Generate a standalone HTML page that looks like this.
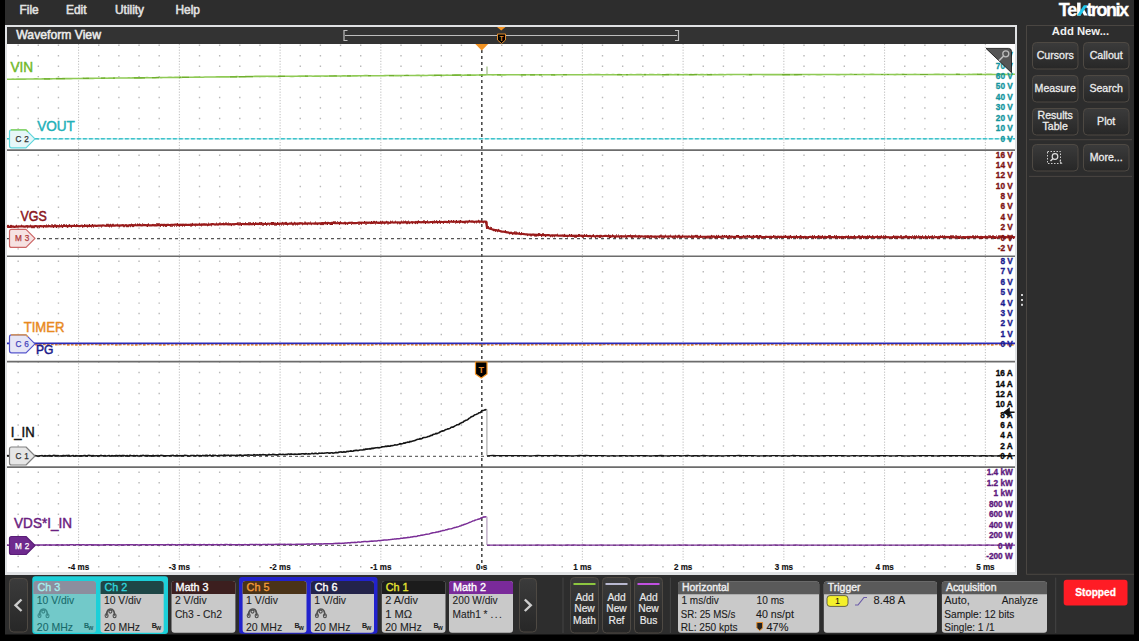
<!DOCTYPE html>
<html><head><meta charset="utf-8"><style>
html,body{margin:0;padding:0;background:#000;width:1139px;height:641px;overflow:hidden}
svg{display:block;font-family:"Liberation Sans", sans-serif}
</style></head><body>
<svg width="1139" height="641" viewBox="0 0 1139 641">
<rect x="0" y="0" width="1139" height="641" fill="#000"/>
<rect x="5" y="0" width="1129" height="634.5" fill="#2d2d2d"/>
<text transform="translate(19.5,13.8) scale(0.96,1)" font-size="12.4" fill="#e2e2e2" font-weight="400" text-anchor="start" stroke="#e2e2e2" stroke-width="0.55" >File</text>
<text transform="translate(66,13.8) scale(0.96,1)" font-size="12.4" fill="#e2e2e2" font-weight="400" text-anchor="start" stroke="#e2e2e2" stroke-width="0.55" >Edit</text>
<text transform="translate(115,13.8) scale(0.96,1)" font-size="12.4" fill="#e2e2e2" font-weight="400" text-anchor="start" stroke="#e2e2e2" stroke-width="0.55" >Utility</text>
<text transform="translate(175.5,13.8) scale(0.96,1)" font-size="12.4" fill="#e2e2e2" font-weight="400" text-anchor="start" stroke="#e2e2e2" stroke-width="0.55" >Help</text>
<text x="1058.8" y="15.6" font-size="18" font-weight="700" fill="#fff" stroke="#fff" stroke-width="0.35" letter-spacing="-1.3">Te</text>
<rect x="1077.1" y="2.6" width="3.5" height="13" fill="#fff"/>
<polygon points="1081.2,10.2 1083.6,8.6 1087.6,15.6 1084.0,15.6" fill="#fff"/>
<polygon points="1077.0,15.6 1080.6,15.6 1087.4,5.2 1083.8,5.2" fill="#1fc8ee"/>
<text x="1086.4" y="15.6" font-size="18" font-weight="700" fill="#fff" stroke="#fff" stroke-width="0.35" letter-spacing="-1.5">tronix</text>
<rect x="5" y="25" width="1012" height="550" fill="#e0e2e4"/>
<rect x="7" y="27" width="1008" height="17" fill="#333333"/>
<rect x="7" y="44" width="1008" height="528" fill="#ffffff"/>
<text x="16.3" y="38.7" font-size="12.2" fill="#ececec" font-weight="400" text-anchor="start" stroke="#ececec" stroke-width="0.5" >Waveform View</text>
<g stroke="#bdbdbd" stroke-width="1.2" fill="none">
<line x1="345" y1="35.5" x2="677" y2="35.5"/>
<polyline points="347.5,30.5 344,30.5 344,40.5 347.5,40.5"/>
<polyline points="675,30.5 678.5,30.5 678.5,40.5 675,40.5"/>
</g>
<polygon points="497,27 505.5,27 501.25,30.5" fill="#f39322"/>
<path d="M497.5,34 h8 v6 l-4,3.5 l-4,-3.5 z" fill="#000" stroke="#e08a2a" stroke-width="1"/>
<text x="501.5" y="40.6" font-size="6.5" font-weight="700" fill="#e08a2a" text-anchor="middle">T</text>
<path d="M17.45,45.30h1.4M37.60,45.30h1.4M57.75,45.30h1.4M98.05,45.30h1.4M118.20,45.30h1.4M138.35,45.30h1.4M158.50,45.30h1.4M198.80,45.30h1.4M218.95,45.30h1.4M239.10,45.30h1.4M259.25,45.30h1.4M299.55,45.30h1.4M319.70,45.30h1.4M339.85,45.30h1.4M360.00,45.30h1.4M400.30,45.30h1.4M420.45,45.30h1.4M440.60,45.30h1.4M460.75,45.30h1.4M501.05,45.30h1.4M521.20,45.30h1.4M541.35,45.30h1.4M561.50,45.30h1.4M601.80,45.30h1.4M621.95,45.30h1.4M642.10,45.30h1.4M662.25,45.30h1.4M702.55,45.30h1.4M722.70,45.30h1.4M742.85,45.30h1.4M763.00,45.30h1.4M803.30,45.30h1.4M823.45,45.30h1.4M843.60,45.30h1.4M863.75,45.30h1.4M904.05,45.30h1.4M924.20,45.30h1.4M944.35,45.30h1.4M964.50,45.30h1.4M17.45,55.75h1.4M37.60,55.75h1.4M57.75,55.75h1.4M98.05,55.75h1.4M118.20,55.75h1.4M138.35,55.75h1.4M158.50,55.75h1.4M198.80,55.75h1.4M218.95,55.75h1.4M239.10,55.75h1.4M259.25,55.75h1.4M299.55,55.75h1.4M319.70,55.75h1.4M339.85,55.75h1.4M360.00,55.75h1.4M400.30,55.75h1.4M420.45,55.75h1.4M440.60,55.75h1.4M460.75,55.75h1.4M501.05,55.75h1.4M521.20,55.75h1.4M541.35,55.75h1.4M561.50,55.75h1.4M601.80,55.75h1.4M621.95,55.75h1.4M642.10,55.75h1.4M662.25,55.75h1.4M702.55,55.75h1.4M722.70,55.75h1.4M742.85,55.75h1.4M763.00,55.75h1.4M803.30,55.75h1.4M823.45,55.75h1.4M843.60,55.75h1.4M863.75,55.75h1.4M904.05,55.75h1.4M924.20,55.75h1.4M944.35,55.75h1.4M964.50,55.75h1.4M17.45,66.20h1.4M37.60,66.20h1.4M57.75,66.20h1.4M98.05,66.20h1.4M118.20,66.20h1.4M138.35,66.20h1.4M158.50,66.20h1.4M198.80,66.20h1.4M218.95,66.20h1.4M239.10,66.20h1.4M259.25,66.20h1.4M299.55,66.20h1.4M319.70,66.20h1.4M339.85,66.20h1.4M360.00,66.20h1.4M400.30,66.20h1.4M420.45,66.20h1.4M440.60,66.20h1.4M460.75,66.20h1.4M501.05,66.20h1.4M521.20,66.20h1.4M541.35,66.20h1.4M561.50,66.20h1.4M601.80,66.20h1.4M621.95,66.20h1.4M642.10,66.20h1.4M662.25,66.20h1.4M702.55,66.20h1.4M722.70,66.20h1.4M742.85,66.20h1.4M763.00,66.20h1.4M803.30,66.20h1.4M823.45,66.20h1.4M843.60,66.20h1.4M863.75,66.20h1.4M904.05,66.20h1.4M924.20,66.20h1.4M944.35,66.20h1.4M964.50,66.20h1.4M17.45,76.65h1.4M37.60,76.65h1.4M57.75,76.65h1.4M98.05,76.65h1.4M118.20,76.65h1.4M138.35,76.65h1.4M158.50,76.65h1.4M198.80,76.65h1.4M218.95,76.65h1.4M239.10,76.65h1.4M259.25,76.65h1.4M299.55,76.65h1.4M319.70,76.65h1.4M339.85,76.65h1.4M360.00,76.65h1.4M400.30,76.65h1.4M420.45,76.65h1.4M440.60,76.65h1.4M460.75,76.65h1.4M501.05,76.65h1.4M521.20,76.65h1.4M541.35,76.65h1.4M561.50,76.65h1.4M601.80,76.65h1.4M621.95,76.65h1.4M642.10,76.65h1.4M662.25,76.65h1.4M702.55,76.65h1.4M722.70,76.65h1.4M742.85,76.65h1.4M763.00,76.65h1.4M803.30,76.65h1.4M823.45,76.65h1.4M843.60,76.65h1.4M863.75,76.65h1.4M904.05,76.65h1.4M924.20,76.65h1.4M944.35,76.65h1.4M964.50,76.65h1.4M17.45,87.10h1.4M37.60,87.10h1.4M57.75,87.10h1.4M98.05,87.10h1.4M118.20,87.10h1.4M138.35,87.10h1.4M158.50,87.10h1.4M198.80,87.10h1.4M218.95,87.10h1.4M239.10,87.10h1.4M259.25,87.10h1.4M299.55,87.10h1.4M319.70,87.10h1.4M339.85,87.10h1.4M360.00,87.10h1.4M400.30,87.10h1.4M420.45,87.10h1.4M440.60,87.10h1.4M460.75,87.10h1.4M501.05,87.10h1.4M521.20,87.10h1.4M541.35,87.10h1.4M561.50,87.10h1.4M601.80,87.10h1.4M621.95,87.10h1.4M642.10,87.10h1.4M662.25,87.10h1.4M702.55,87.10h1.4M722.70,87.10h1.4M742.85,87.10h1.4M763.00,87.10h1.4M803.30,87.10h1.4M823.45,87.10h1.4M843.60,87.10h1.4M863.75,87.10h1.4M904.05,87.10h1.4M924.20,87.10h1.4M944.35,87.10h1.4M964.50,87.10h1.4M17.45,97.55h1.4M37.60,97.55h1.4M57.75,97.55h1.4M98.05,97.55h1.4M118.20,97.55h1.4M138.35,97.55h1.4M158.50,97.55h1.4M198.80,97.55h1.4M218.95,97.55h1.4M239.10,97.55h1.4M259.25,97.55h1.4M299.55,97.55h1.4M319.70,97.55h1.4M339.85,97.55h1.4M360.00,97.55h1.4M400.30,97.55h1.4M420.45,97.55h1.4M440.60,97.55h1.4M460.75,97.55h1.4M501.05,97.55h1.4M521.20,97.55h1.4M541.35,97.55h1.4M561.50,97.55h1.4M601.80,97.55h1.4M621.95,97.55h1.4M642.10,97.55h1.4M662.25,97.55h1.4M702.55,97.55h1.4M722.70,97.55h1.4M742.85,97.55h1.4M763.00,97.55h1.4M803.30,97.55h1.4M823.45,97.55h1.4M843.60,97.55h1.4M863.75,97.55h1.4M904.05,97.55h1.4M924.20,97.55h1.4M944.35,97.55h1.4M964.50,97.55h1.4M17.45,108.00h1.4M37.60,108.00h1.4M57.75,108.00h1.4M98.05,108.00h1.4M118.20,108.00h1.4M138.35,108.00h1.4M158.50,108.00h1.4M198.80,108.00h1.4M218.95,108.00h1.4M239.10,108.00h1.4M259.25,108.00h1.4M299.55,108.00h1.4M319.70,108.00h1.4M339.85,108.00h1.4M360.00,108.00h1.4M400.30,108.00h1.4M420.45,108.00h1.4M440.60,108.00h1.4M460.75,108.00h1.4M501.05,108.00h1.4M521.20,108.00h1.4M541.35,108.00h1.4M561.50,108.00h1.4M601.80,108.00h1.4M621.95,108.00h1.4M642.10,108.00h1.4M662.25,108.00h1.4M702.55,108.00h1.4M722.70,108.00h1.4M742.85,108.00h1.4M763.00,108.00h1.4M803.30,108.00h1.4M823.45,108.00h1.4M843.60,108.00h1.4M863.75,108.00h1.4M904.05,108.00h1.4M924.20,108.00h1.4M944.35,108.00h1.4M964.50,108.00h1.4M17.45,118.45h1.4M37.60,118.45h1.4M57.75,118.45h1.4M98.05,118.45h1.4M118.20,118.45h1.4M138.35,118.45h1.4M158.50,118.45h1.4M198.80,118.45h1.4M218.95,118.45h1.4M239.10,118.45h1.4M259.25,118.45h1.4M299.55,118.45h1.4M319.70,118.45h1.4M339.85,118.45h1.4M360.00,118.45h1.4M400.30,118.45h1.4M420.45,118.45h1.4M440.60,118.45h1.4M460.75,118.45h1.4M501.05,118.45h1.4M521.20,118.45h1.4M541.35,118.45h1.4M561.50,118.45h1.4M601.80,118.45h1.4M621.95,118.45h1.4M642.10,118.45h1.4M662.25,118.45h1.4M702.55,118.45h1.4M722.70,118.45h1.4M742.85,118.45h1.4M763.00,118.45h1.4M803.30,118.45h1.4M823.45,118.45h1.4M843.60,118.45h1.4M863.75,118.45h1.4M904.05,118.45h1.4M924.20,118.45h1.4M944.35,118.45h1.4M964.50,118.45h1.4M17.45,128.90h1.4M37.60,128.90h1.4M57.75,128.90h1.4M98.05,128.90h1.4M118.20,128.90h1.4M138.35,128.90h1.4M158.50,128.90h1.4M198.80,128.90h1.4M218.95,128.90h1.4M239.10,128.90h1.4M259.25,128.90h1.4M299.55,128.90h1.4M319.70,128.90h1.4M339.85,128.90h1.4M360.00,128.90h1.4M400.30,128.90h1.4M420.45,128.90h1.4M440.60,128.90h1.4M460.75,128.90h1.4M501.05,128.90h1.4M521.20,128.90h1.4M541.35,128.90h1.4M561.50,128.90h1.4M601.80,128.90h1.4M621.95,128.90h1.4M642.10,128.90h1.4M662.25,128.90h1.4M702.55,128.90h1.4M722.70,128.90h1.4M742.85,128.90h1.4M763.00,128.90h1.4M803.30,128.90h1.4M823.45,128.90h1.4M843.60,128.90h1.4M863.75,128.90h1.4M904.05,128.90h1.4M924.20,128.90h1.4M944.35,128.90h1.4M964.50,128.90h1.4M17.45,139.35h1.4M37.60,139.35h1.4M57.75,139.35h1.4M98.05,139.35h1.4M118.20,139.35h1.4M138.35,139.35h1.4M158.50,139.35h1.4M198.80,139.35h1.4M218.95,139.35h1.4M239.10,139.35h1.4M259.25,139.35h1.4M299.55,139.35h1.4M319.70,139.35h1.4M339.85,139.35h1.4M360.00,139.35h1.4M400.30,139.35h1.4M420.45,139.35h1.4M440.60,139.35h1.4M460.75,139.35h1.4M501.05,139.35h1.4M521.20,139.35h1.4M541.35,139.35h1.4M561.50,139.35h1.4M601.80,139.35h1.4M621.95,139.35h1.4M642.10,139.35h1.4M662.25,139.35h1.4M702.55,139.35h1.4M722.70,139.35h1.4M742.85,139.35h1.4M763.00,139.35h1.4M803.30,139.35h1.4M823.45,139.35h1.4M843.60,139.35h1.4M863.75,139.35h1.4M904.05,139.35h1.4M924.20,139.35h1.4M944.35,139.35h1.4M964.50,139.35h1.4M17.45,155.30h1.4M37.60,155.30h1.4M57.75,155.30h1.4M98.05,155.30h1.4M118.20,155.30h1.4M138.35,155.30h1.4M158.50,155.30h1.4M198.80,155.30h1.4M218.95,155.30h1.4M239.10,155.30h1.4M259.25,155.30h1.4M299.55,155.30h1.4M319.70,155.30h1.4M339.85,155.30h1.4M360.00,155.30h1.4M400.30,155.30h1.4M420.45,155.30h1.4M440.60,155.30h1.4M460.75,155.30h1.4M501.05,155.30h1.4M521.20,155.30h1.4M541.35,155.30h1.4M561.50,155.30h1.4M601.80,155.30h1.4M621.95,155.30h1.4M642.10,155.30h1.4M662.25,155.30h1.4M702.55,155.30h1.4M722.70,155.30h1.4M742.85,155.30h1.4M763.00,155.30h1.4M803.30,155.30h1.4M823.45,155.30h1.4M843.60,155.30h1.4M863.75,155.30h1.4M904.05,155.30h1.4M924.20,155.30h1.4M944.35,155.30h1.4M964.50,155.30h1.4M17.45,165.70h1.4M37.60,165.70h1.4M57.75,165.70h1.4M98.05,165.70h1.4M118.20,165.70h1.4M138.35,165.70h1.4M158.50,165.70h1.4M198.80,165.70h1.4M218.95,165.70h1.4M239.10,165.70h1.4M259.25,165.70h1.4M299.55,165.70h1.4M319.70,165.70h1.4M339.85,165.70h1.4M360.00,165.70h1.4M400.30,165.70h1.4M420.45,165.70h1.4M440.60,165.70h1.4M460.75,165.70h1.4M501.05,165.70h1.4M521.20,165.70h1.4M541.35,165.70h1.4M561.50,165.70h1.4M601.80,165.70h1.4M621.95,165.70h1.4M642.10,165.70h1.4M662.25,165.70h1.4M702.55,165.70h1.4M722.70,165.70h1.4M742.85,165.70h1.4M763.00,165.70h1.4M803.30,165.70h1.4M823.45,165.70h1.4M843.60,165.70h1.4M863.75,165.70h1.4M904.05,165.70h1.4M924.20,165.70h1.4M944.35,165.70h1.4M964.50,165.70h1.4M17.45,176.10h1.4M37.60,176.10h1.4M57.75,176.10h1.4M98.05,176.10h1.4M118.20,176.10h1.4M138.35,176.10h1.4M158.50,176.10h1.4M198.80,176.10h1.4M218.95,176.10h1.4M239.10,176.10h1.4M259.25,176.10h1.4M299.55,176.10h1.4M319.70,176.10h1.4M339.85,176.10h1.4M360.00,176.10h1.4M400.30,176.10h1.4M420.45,176.10h1.4M440.60,176.10h1.4M460.75,176.10h1.4M501.05,176.10h1.4M521.20,176.10h1.4M541.35,176.10h1.4M561.50,176.10h1.4M601.80,176.10h1.4M621.95,176.10h1.4M642.10,176.10h1.4M662.25,176.10h1.4M702.55,176.10h1.4M722.70,176.10h1.4M742.85,176.10h1.4M763.00,176.10h1.4M803.30,176.10h1.4M823.45,176.10h1.4M843.60,176.10h1.4M863.75,176.10h1.4M904.05,176.10h1.4M924.20,176.10h1.4M944.35,176.10h1.4M964.50,176.10h1.4M17.45,186.50h1.4M37.60,186.50h1.4M57.75,186.50h1.4M98.05,186.50h1.4M118.20,186.50h1.4M138.35,186.50h1.4M158.50,186.50h1.4M198.80,186.50h1.4M218.95,186.50h1.4M239.10,186.50h1.4M259.25,186.50h1.4M299.55,186.50h1.4M319.70,186.50h1.4M339.85,186.50h1.4M360.00,186.50h1.4M400.30,186.50h1.4M420.45,186.50h1.4M440.60,186.50h1.4M460.75,186.50h1.4M501.05,186.50h1.4M521.20,186.50h1.4M541.35,186.50h1.4M561.50,186.50h1.4M601.80,186.50h1.4M621.95,186.50h1.4M642.10,186.50h1.4M662.25,186.50h1.4M702.55,186.50h1.4M722.70,186.50h1.4M742.85,186.50h1.4M763.00,186.50h1.4M803.30,186.50h1.4M823.45,186.50h1.4M843.60,186.50h1.4M863.75,186.50h1.4M904.05,186.50h1.4M924.20,186.50h1.4M944.35,186.50h1.4M964.50,186.50h1.4M17.45,196.90h1.4M37.60,196.90h1.4M57.75,196.90h1.4M98.05,196.90h1.4M118.20,196.90h1.4M138.35,196.90h1.4M158.50,196.90h1.4M198.80,196.90h1.4M218.95,196.90h1.4M239.10,196.90h1.4M259.25,196.90h1.4M299.55,196.90h1.4M319.70,196.90h1.4M339.85,196.90h1.4M360.00,196.90h1.4M400.30,196.90h1.4M420.45,196.90h1.4M440.60,196.90h1.4M460.75,196.90h1.4M501.05,196.90h1.4M521.20,196.90h1.4M541.35,196.90h1.4M561.50,196.90h1.4M601.80,196.90h1.4M621.95,196.90h1.4M642.10,196.90h1.4M662.25,196.90h1.4M702.55,196.90h1.4M722.70,196.90h1.4M742.85,196.90h1.4M763.00,196.90h1.4M803.30,196.90h1.4M823.45,196.90h1.4M843.60,196.90h1.4M863.75,196.90h1.4M904.05,196.90h1.4M924.20,196.90h1.4M944.35,196.90h1.4M964.50,196.90h1.4M17.45,207.30h1.4M37.60,207.30h1.4M57.75,207.30h1.4M98.05,207.30h1.4M118.20,207.30h1.4M138.35,207.30h1.4M158.50,207.30h1.4M198.80,207.30h1.4M218.95,207.30h1.4M239.10,207.30h1.4M259.25,207.30h1.4M299.55,207.30h1.4M319.70,207.30h1.4M339.85,207.30h1.4M360.00,207.30h1.4M400.30,207.30h1.4M420.45,207.30h1.4M440.60,207.30h1.4M460.75,207.30h1.4M501.05,207.30h1.4M521.20,207.30h1.4M541.35,207.30h1.4M561.50,207.30h1.4M601.80,207.30h1.4M621.95,207.30h1.4M642.10,207.30h1.4M662.25,207.30h1.4M702.55,207.30h1.4M722.70,207.30h1.4M742.85,207.30h1.4M763.00,207.30h1.4M803.30,207.30h1.4M823.45,207.30h1.4M843.60,207.30h1.4M863.75,207.30h1.4M904.05,207.30h1.4M924.20,207.30h1.4M944.35,207.30h1.4M964.50,207.30h1.4M17.45,217.70h1.4M37.60,217.70h1.4M57.75,217.70h1.4M98.05,217.70h1.4M118.20,217.70h1.4M138.35,217.70h1.4M158.50,217.70h1.4M198.80,217.70h1.4M218.95,217.70h1.4M239.10,217.70h1.4M259.25,217.70h1.4M299.55,217.70h1.4M319.70,217.70h1.4M339.85,217.70h1.4M360.00,217.70h1.4M400.30,217.70h1.4M420.45,217.70h1.4M440.60,217.70h1.4M460.75,217.70h1.4M501.05,217.70h1.4M521.20,217.70h1.4M541.35,217.70h1.4M561.50,217.70h1.4M601.80,217.70h1.4M621.95,217.70h1.4M642.10,217.70h1.4M662.25,217.70h1.4M702.55,217.70h1.4M722.70,217.70h1.4M742.85,217.70h1.4M763.00,217.70h1.4M803.30,217.70h1.4M823.45,217.70h1.4M843.60,217.70h1.4M863.75,217.70h1.4M904.05,217.70h1.4M924.20,217.70h1.4M944.35,217.70h1.4M964.50,217.70h1.4M17.45,228.10h1.4M37.60,228.10h1.4M57.75,228.10h1.4M98.05,228.10h1.4M118.20,228.10h1.4M138.35,228.10h1.4M158.50,228.10h1.4M198.80,228.10h1.4M218.95,228.10h1.4M239.10,228.10h1.4M259.25,228.10h1.4M299.55,228.10h1.4M319.70,228.10h1.4M339.85,228.10h1.4M360.00,228.10h1.4M400.30,228.10h1.4M420.45,228.10h1.4M440.60,228.10h1.4M460.75,228.10h1.4M501.05,228.10h1.4M521.20,228.10h1.4M541.35,228.10h1.4M561.50,228.10h1.4M601.80,228.10h1.4M621.95,228.10h1.4M642.10,228.10h1.4M662.25,228.10h1.4M702.55,228.10h1.4M722.70,228.10h1.4M742.85,228.10h1.4M763.00,228.10h1.4M803.30,228.10h1.4M823.45,228.10h1.4M843.60,228.10h1.4M863.75,228.10h1.4M904.05,228.10h1.4M924.20,228.10h1.4M944.35,228.10h1.4M964.50,228.10h1.4M17.45,238.50h1.4M37.60,238.50h1.4M57.75,238.50h1.4M98.05,238.50h1.4M118.20,238.50h1.4M138.35,238.50h1.4M158.50,238.50h1.4M198.80,238.50h1.4M218.95,238.50h1.4M239.10,238.50h1.4M259.25,238.50h1.4M299.55,238.50h1.4M319.70,238.50h1.4M339.85,238.50h1.4M360.00,238.50h1.4M400.30,238.50h1.4M420.45,238.50h1.4M440.60,238.50h1.4M460.75,238.50h1.4M501.05,238.50h1.4M521.20,238.50h1.4M541.35,238.50h1.4M561.50,238.50h1.4M601.80,238.50h1.4M621.95,238.50h1.4M642.10,238.50h1.4M662.25,238.50h1.4M702.55,238.50h1.4M722.70,238.50h1.4M742.85,238.50h1.4M763.00,238.50h1.4M803.30,238.50h1.4M823.45,238.50h1.4M843.60,238.50h1.4M863.75,238.50h1.4M904.05,238.50h1.4M924.20,238.50h1.4M944.35,238.50h1.4M964.50,238.50h1.4M17.45,248.90h1.4M37.60,248.90h1.4M57.75,248.90h1.4M98.05,248.90h1.4M118.20,248.90h1.4M138.35,248.90h1.4M158.50,248.90h1.4M198.80,248.90h1.4M218.95,248.90h1.4M239.10,248.90h1.4M259.25,248.90h1.4M299.55,248.90h1.4M319.70,248.90h1.4M339.85,248.90h1.4M360.00,248.90h1.4M400.30,248.90h1.4M420.45,248.90h1.4M440.60,248.90h1.4M460.75,248.90h1.4M501.05,248.90h1.4M521.20,248.90h1.4M541.35,248.90h1.4M561.50,248.90h1.4M601.80,248.90h1.4M621.95,248.90h1.4M642.10,248.90h1.4M662.25,248.90h1.4M702.55,248.90h1.4M722.70,248.90h1.4M742.85,248.90h1.4M763.00,248.90h1.4M803.30,248.90h1.4M823.45,248.90h1.4M843.60,248.90h1.4M863.75,248.90h1.4M904.05,248.90h1.4M924.20,248.90h1.4M944.35,248.90h1.4M964.50,248.90h1.4M17.45,261.30h1.4M37.60,261.30h1.4M57.75,261.30h1.4M98.05,261.30h1.4M118.20,261.30h1.4M138.35,261.30h1.4M158.50,261.30h1.4M198.80,261.30h1.4M218.95,261.30h1.4M239.10,261.30h1.4M259.25,261.30h1.4M299.55,261.30h1.4M319.70,261.30h1.4M339.85,261.30h1.4M360.00,261.30h1.4M400.30,261.30h1.4M420.45,261.30h1.4M440.60,261.30h1.4M460.75,261.30h1.4M501.05,261.30h1.4M521.20,261.30h1.4M541.35,261.30h1.4M561.50,261.30h1.4M601.80,261.30h1.4M621.95,261.30h1.4M642.10,261.30h1.4M662.25,261.30h1.4M702.55,261.30h1.4M722.70,261.30h1.4M742.85,261.30h1.4M763.00,261.30h1.4M803.30,261.30h1.4M823.45,261.30h1.4M843.60,261.30h1.4M863.75,261.30h1.4M904.05,261.30h1.4M924.20,261.30h1.4M944.35,261.30h1.4M964.50,261.30h1.4M17.45,271.75h1.4M37.60,271.75h1.4M57.75,271.75h1.4M98.05,271.75h1.4M118.20,271.75h1.4M138.35,271.75h1.4M158.50,271.75h1.4M198.80,271.75h1.4M218.95,271.75h1.4M239.10,271.75h1.4M259.25,271.75h1.4M299.55,271.75h1.4M319.70,271.75h1.4M339.85,271.75h1.4M360.00,271.75h1.4M400.30,271.75h1.4M420.45,271.75h1.4M440.60,271.75h1.4M460.75,271.75h1.4M501.05,271.75h1.4M521.20,271.75h1.4M541.35,271.75h1.4M561.50,271.75h1.4M601.80,271.75h1.4M621.95,271.75h1.4M642.10,271.75h1.4M662.25,271.75h1.4M702.55,271.75h1.4M722.70,271.75h1.4M742.85,271.75h1.4M763.00,271.75h1.4M803.30,271.75h1.4M823.45,271.75h1.4M843.60,271.75h1.4M863.75,271.75h1.4M904.05,271.75h1.4M924.20,271.75h1.4M944.35,271.75h1.4M964.50,271.75h1.4M17.45,282.20h1.4M37.60,282.20h1.4M57.75,282.20h1.4M98.05,282.20h1.4M118.20,282.20h1.4M138.35,282.20h1.4M158.50,282.20h1.4M198.80,282.20h1.4M218.95,282.20h1.4M239.10,282.20h1.4M259.25,282.20h1.4M299.55,282.20h1.4M319.70,282.20h1.4M339.85,282.20h1.4M360.00,282.20h1.4M400.30,282.20h1.4M420.45,282.20h1.4M440.60,282.20h1.4M460.75,282.20h1.4M501.05,282.20h1.4M521.20,282.20h1.4M541.35,282.20h1.4M561.50,282.20h1.4M601.80,282.20h1.4M621.95,282.20h1.4M642.10,282.20h1.4M662.25,282.20h1.4M702.55,282.20h1.4M722.70,282.20h1.4M742.85,282.20h1.4M763.00,282.20h1.4M803.30,282.20h1.4M823.45,282.20h1.4M843.60,282.20h1.4M863.75,282.20h1.4M904.05,282.20h1.4M924.20,282.20h1.4M944.35,282.20h1.4M964.50,282.20h1.4M17.45,292.65h1.4M37.60,292.65h1.4M57.75,292.65h1.4M98.05,292.65h1.4M118.20,292.65h1.4M138.35,292.65h1.4M158.50,292.65h1.4M198.80,292.65h1.4M218.95,292.65h1.4M239.10,292.65h1.4M259.25,292.65h1.4M299.55,292.65h1.4M319.70,292.65h1.4M339.85,292.65h1.4M360.00,292.65h1.4M400.30,292.65h1.4M420.45,292.65h1.4M440.60,292.65h1.4M460.75,292.65h1.4M501.05,292.65h1.4M521.20,292.65h1.4M541.35,292.65h1.4M561.50,292.65h1.4M601.80,292.65h1.4M621.95,292.65h1.4M642.10,292.65h1.4M662.25,292.65h1.4M702.55,292.65h1.4M722.70,292.65h1.4M742.85,292.65h1.4M763.00,292.65h1.4M803.30,292.65h1.4M823.45,292.65h1.4M843.60,292.65h1.4M863.75,292.65h1.4M904.05,292.65h1.4M924.20,292.65h1.4M944.35,292.65h1.4M964.50,292.65h1.4M17.45,303.10h1.4M37.60,303.10h1.4M57.75,303.10h1.4M98.05,303.10h1.4M118.20,303.10h1.4M138.35,303.10h1.4M158.50,303.10h1.4M198.80,303.10h1.4M218.95,303.10h1.4M239.10,303.10h1.4M259.25,303.10h1.4M299.55,303.10h1.4M319.70,303.10h1.4M339.85,303.10h1.4M360.00,303.10h1.4M400.30,303.10h1.4M420.45,303.10h1.4M440.60,303.10h1.4M460.75,303.10h1.4M501.05,303.10h1.4M521.20,303.10h1.4M541.35,303.10h1.4M561.50,303.10h1.4M601.80,303.10h1.4M621.95,303.10h1.4M642.10,303.10h1.4M662.25,303.10h1.4M702.55,303.10h1.4M722.70,303.10h1.4M742.85,303.10h1.4M763.00,303.10h1.4M803.30,303.10h1.4M823.45,303.10h1.4M843.60,303.10h1.4M863.75,303.10h1.4M904.05,303.10h1.4M924.20,303.10h1.4M944.35,303.10h1.4M964.50,303.10h1.4M17.45,313.55h1.4M37.60,313.55h1.4M57.75,313.55h1.4M98.05,313.55h1.4M118.20,313.55h1.4M138.35,313.55h1.4M158.50,313.55h1.4M198.80,313.55h1.4M218.95,313.55h1.4M239.10,313.55h1.4M259.25,313.55h1.4M299.55,313.55h1.4M319.70,313.55h1.4M339.85,313.55h1.4M360.00,313.55h1.4M400.30,313.55h1.4M420.45,313.55h1.4M440.60,313.55h1.4M460.75,313.55h1.4M501.05,313.55h1.4M521.20,313.55h1.4M541.35,313.55h1.4M561.50,313.55h1.4M601.80,313.55h1.4M621.95,313.55h1.4M642.10,313.55h1.4M662.25,313.55h1.4M702.55,313.55h1.4M722.70,313.55h1.4M742.85,313.55h1.4M763.00,313.55h1.4M803.30,313.55h1.4M823.45,313.55h1.4M843.60,313.55h1.4M863.75,313.55h1.4M904.05,313.55h1.4M924.20,313.55h1.4M944.35,313.55h1.4M964.50,313.55h1.4M17.45,324.00h1.4M37.60,324.00h1.4M57.75,324.00h1.4M98.05,324.00h1.4M118.20,324.00h1.4M138.35,324.00h1.4M158.50,324.00h1.4M198.80,324.00h1.4M218.95,324.00h1.4M239.10,324.00h1.4M259.25,324.00h1.4M299.55,324.00h1.4M319.70,324.00h1.4M339.85,324.00h1.4M360.00,324.00h1.4M400.30,324.00h1.4M420.45,324.00h1.4M440.60,324.00h1.4M460.75,324.00h1.4M501.05,324.00h1.4M521.20,324.00h1.4M541.35,324.00h1.4M561.50,324.00h1.4M601.80,324.00h1.4M621.95,324.00h1.4M642.10,324.00h1.4M662.25,324.00h1.4M702.55,324.00h1.4M722.70,324.00h1.4M742.85,324.00h1.4M763.00,324.00h1.4M803.30,324.00h1.4M823.45,324.00h1.4M843.60,324.00h1.4M863.75,324.00h1.4M904.05,324.00h1.4M924.20,324.00h1.4M944.35,324.00h1.4M964.50,324.00h1.4M17.45,334.45h1.4M37.60,334.45h1.4M57.75,334.45h1.4M98.05,334.45h1.4M118.20,334.45h1.4M138.35,334.45h1.4M158.50,334.45h1.4M198.80,334.45h1.4M218.95,334.45h1.4M239.10,334.45h1.4M259.25,334.45h1.4M299.55,334.45h1.4M319.70,334.45h1.4M339.85,334.45h1.4M360.00,334.45h1.4M400.30,334.45h1.4M420.45,334.45h1.4M440.60,334.45h1.4M460.75,334.45h1.4M501.05,334.45h1.4M521.20,334.45h1.4M541.35,334.45h1.4M561.50,334.45h1.4M601.80,334.45h1.4M621.95,334.45h1.4M642.10,334.45h1.4M662.25,334.45h1.4M702.55,334.45h1.4M722.70,334.45h1.4M742.85,334.45h1.4M763.00,334.45h1.4M803.30,334.45h1.4M823.45,334.45h1.4M843.60,334.45h1.4M863.75,334.45h1.4M904.05,334.45h1.4M924.20,334.45h1.4M944.35,334.45h1.4M964.50,334.45h1.4M17.45,344.90h1.4M37.60,344.90h1.4M57.75,344.90h1.4M98.05,344.90h1.4M118.20,344.90h1.4M138.35,344.90h1.4M158.50,344.90h1.4M198.80,344.90h1.4M218.95,344.90h1.4M239.10,344.90h1.4M259.25,344.90h1.4M299.55,344.90h1.4M319.70,344.90h1.4M339.85,344.90h1.4M360.00,344.90h1.4M400.30,344.90h1.4M420.45,344.90h1.4M440.60,344.90h1.4M460.75,344.90h1.4M501.05,344.90h1.4M521.20,344.90h1.4M541.35,344.90h1.4M561.50,344.90h1.4M601.80,344.90h1.4M621.95,344.90h1.4M642.10,344.90h1.4M662.25,344.90h1.4M702.55,344.90h1.4M722.70,344.90h1.4M742.85,344.90h1.4M763.00,344.90h1.4M803.30,344.90h1.4M823.45,344.90h1.4M843.60,344.90h1.4M863.75,344.90h1.4M904.05,344.90h1.4M924.20,344.90h1.4M944.35,344.90h1.4M964.50,344.90h1.4M17.45,355.35h1.4M37.60,355.35h1.4M57.75,355.35h1.4M98.05,355.35h1.4M118.20,355.35h1.4M138.35,355.35h1.4M158.50,355.35h1.4M198.80,355.35h1.4M218.95,355.35h1.4M239.10,355.35h1.4M259.25,355.35h1.4M299.55,355.35h1.4M319.70,355.35h1.4M339.85,355.35h1.4M360.00,355.35h1.4M400.30,355.35h1.4M420.45,355.35h1.4M440.60,355.35h1.4M460.75,355.35h1.4M501.05,355.35h1.4M521.20,355.35h1.4M541.35,355.35h1.4M561.50,355.35h1.4M601.80,355.35h1.4M621.95,355.35h1.4M642.10,355.35h1.4M662.25,355.35h1.4M702.55,355.35h1.4M722.70,355.35h1.4M742.85,355.35h1.4M763.00,355.35h1.4M803.30,355.35h1.4M823.45,355.35h1.4M843.60,355.35h1.4M863.75,355.35h1.4M904.05,355.35h1.4M924.20,355.35h1.4M944.35,355.35h1.4M964.50,355.35h1.4M17.45,362.00h1.4M37.60,362.00h1.4M57.75,362.00h1.4M98.05,362.00h1.4M118.20,362.00h1.4M138.35,362.00h1.4M158.50,362.00h1.4M198.80,362.00h1.4M218.95,362.00h1.4M239.10,362.00h1.4M259.25,362.00h1.4M299.55,362.00h1.4M319.70,362.00h1.4M339.85,362.00h1.4M360.00,362.00h1.4M400.30,362.00h1.4M420.45,362.00h1.4M440.60,362.00h1.4M460.75,362.00h1.4M501.05,362.00h1.4M521.20,362.00h1.4M541.35,362.00h1.4M561.50,362.00h1.4M601.80,362.00h1.4M621.95,362.00h1.4M642.10,362.00h1.4M662.25,362.00h1.4M702.55,362.00h1.4M722.70,362.00h1.4M742.85,362.00h1.4M763.00,362.00h1.4M803.30,362.00h1.4M823.45,362.00h1.4M843.60,362.00h1.4M863.75,362.00h1.4M904.05,362.00h1.4M924.20,362.00h1.4M944.35,362.00h1.4M964.50,362.00h1.4M17.45,372.50h1.4M37.60,372.50h1.4M57.75,372.50h1.4M98.05,372.50h1.4M118.20,372.50h1.4M138.35,372.50h1.4M158.50,372.50h1.4M198.80,372.50h1.4M218.95,372.50h1.4M239.10,372.50h1.4M259.25,372.50h1.4M299.55,372.50h1.4M319.70,372.50h1.4M339.85,372.50h1.4M360.00,372.50h1.4M400.30,372.50h1.4M420.45,372.50h1.4M440.60,372.50h1.4M460.75,372.50h1.4M501.05,372.50h1.4M521.20,372.50h1.4M541.35,372.50h1.4M561.50,372.50h1.4M601.80,372.50h1.4M621.95,372.50h1.4M642.10,372.50h1.4M662.25,372.50h1.4M702.55,372.50h1.4M722.70,372.50h1.4M742.85,372.50h1.4M763.00,372.50h1.4M803.30,372.50h1.4M823.45,372.50h1.4M843.60,372.50h1.4M863.75,372.50h1.4M904.05,372.50h1.4M924.20,372.50h1.4M944.35,372.50h1.4M964.50,372.50h1.4M17.45,383.00h1.4M37.60,383.00h1.4M57.75,383.00h1.4M98.05,383.00h1.4M118.20,383.00h1.4M138.35,383.00h1.4M158.50,383.00h1.4M198.80,383.00h1.4M218.95,383.00h1.4M239.10,383.00h1.4M259.25,383.00h1.4M299.55,383.00h1.4M319.70,383.00h1.4M339.85,383.00h1.4M360.00,383.00h1.4M400.30,383.00h1.4M420.45,383.00h1.4M440.60,383.00h1.4M460.75,383.00h1.4M501.05,383.00h1.4M521.20,383.00h1.4M541.35,383.00h1.4M561.50,383.00h1.4M601.80,383.00h1.4M621.95,383.00h1.4M642.10,383.00h1.4M662.25,383.00h1.4M702.55,383.00h1.4M722.70,383.00h1.4M742.85,383.00h1.4M763.00,383.00h1.4M803.30,383.00h1.4M823.45,383.00h1.4M843.60,383.00h1.4M863.75,383.00h1.4M904.05,383.00h1.4M924.20,383.00h1.4M944.35,383.00h1.4M964.50,383.00h1.4M17.45,393.50h1.4M37.60,393.50h1.4M57.75,393.50h1.4M98.05,393.50h1.4M118.20,393.50h1.4M138.35,393.50h1.4M158.50,393.50h1.4M198.80,393.50h1.4M218.95,393.50h1.4M239.10,393.50h1.4M259.25,393.50h1.4M299.55,393.50h1.4M319.70,393.50h1.4M339.85,393.50h1.4M360.00,393.50h1.4M400.30,393.50h1.4M420.45,393.50h1.4M440.60,393.50h1.4M460.75,393.50h1.4M501.05,393.50h1.4M521.20,393.50h1.4M541.35,393.50h1.4M561.50,393.50h1.4M601.80,393.50h1.4M621.95,393.50h1.4M642.10,393.50h1.4M662.25,393.50h1.4M702.55,393.50h1.4M722.70,393.50h1.4M742.85,393.50h1.4M763.00,393.50h1.4M803.30,393.50h1.4M823.45,393.50h1.4M843.60,393.50h1.4M863.75,393.50h1.4M904.05,393.50h1.4M924.20,393.50h1.4M944.35,393.50h1.4M964.50,393.50h1.4M17.45,404.00h1.4M37.60,404.00h1.4M57.75,404.00h1.4M98.05,404.00h1.4M118.20,404.00h1.4M138.35,404.00h1.4M158.50,404.00h1.4M198.80,404.00h1.4M218.95,404.00h1.4M239.10,404.00h1.4M259.25,404.00h1.4M299.55,404.00h1.4M319.70,404.00h1.4M339.85,404.00h1.4M360.00,404.00h1.4M400.30,404.00h1.4M420.45,404.00h1.4M440.60,404.00h1.4M460.75,404.00h1.4M501.05,404.00h1.4M521.20,404.00h1.4M541.35,404.00h1.4M561.50,404.00h1.4M601.80,404.00h1.4M621.95,404.00h1.4M642.10,404.00h1.4M662.25,404.00h1.4M702.55,404.00h1.4M722.70,404.00h1.4M742.85,404.00h1.4M763.00,404.00h1.4M803.30,404.00h1.4M823.45,404.00h1.4M843.60,404.00h1.4M863.75,404.00h1.4M904.05,404.00h1.4M924.20,404.00h1.4M944.35,404.00h1.4M964.50,404.00h1.4M17.45,414.50h1.4M37.60,414.50h1.4M57.75,414.50h1.4M98.05,414.50h1.4M118.20,414.50h1.4M138.35,414.50h1.4M158.50,414.50h1.4M198.80,414.50h1.4M218.95,414.50h1.4M239.10,414.50h1.4M259.25,414.50h1.4M299.55,414.50h1.4M319.70,414.50h1.4M339.85,414.50h1.4M360.00,414.50h1.4M400.30,414.50h1.4M420.45,414.50h1.4M440.60,414.50h1.4M460.75,414.50h1.4M501.05,414.50h1.4M521.20,414.50h1.4M541.35,414.50h1.4M561.50,414.50h1.4M601.80,414.50h1.4M621.95,414.50h1.4M642.10,414.50h1.4M662.25,414.50h1.4M702.55,414.50h1.4M722.70,414.50h1.4M742.85,414.50h1.4M763.00,414.50h1.4M803.30,414.50h1.4M823.45,414.50h1.4M843.60,414.50h1.4M863.75,414.50h1.4M904.05,414.50h1.4M924.20,414.50h1.4M944.35,414.50h1.4M964.50,414.50h1.4M17.45,425.00h1.4M37.60,425.00h1.4M57.75,425.00h1.4M98.05,425.00h1.4M118.20,425.00h1.4M138.35,425.00h1.4M158.50,425.00h1.4M198.80,425.00h1.4M218.95,425.00h1.4M239.10,425.00h1.4M259.25,425.00h1.4M299.55,425.00h1.4M319.70,425.00h1.4M339.85,425.00h1.4M360.00,425.00h1.4M400.30,425.00h1.4M420.45,425.00h1.4M440.60,425.00h1.4M460.75,425.00h1.4M501.05,425.00h1.4M521.20,425.00h1.4M541.35,425.00h1.4M561.50,425.00h1.4M601.80,425.00h1.4M621.95,425.00h1.4M642.10,425.00h1.4M662.25,425.00h1.4M702.55,425.00h1.4M722.70,425.00h1.4M742.85,425.00h1.4M763.00,425.00h1.4M803.30,425.00h1.4M823.45,425.00h1.4M843.60,425.00h1.4M863.75,425.00h1.4M904.05,425.00h1.4M924.20,425.00h1.4M944.35,425.00h1.4M964.50,425.00h1.4M17.45,435.50h1.4M37.60,435.50h1.4M57.75,435.50h1.4M98.05,435.50h1.4M118.20,435.50h1.4M138.35,435.50h1.4M158.50,435.50h1.4M198.80,435.50h1.4M218.95,435.50h1.4M239.10,435.50h1.4M259.25,435.50h1.4M299.55,435.50h1.4M319.70,435.50h1.4M339.85,435.50h1.4M360.00,435.50h1.4M400.30,435.50h1.4M420.45,435.50h1.4M440.60,435.50h1.4M460.75,435.50h1.4M501.05,435.50h1.4M521.20,435.50h1.4M541.35,435.50h1.4M561.50,435.50h1.4M601.80,435.50h1.4M621.95,435.50h1.4M642.10,435.50h1.4M662.25,435.50h1.4M702.55,435.50h1.4M722.70,435.50h1.4M742.85,435.50h1.4M763.00,435.50h1.4M803.30,435.50h1.4M823.45,435.50h1.4M843.60,435.50h1.4M863.75,435.50h1.4M904.05,435.50h1.4M924.20,435.50h1.4M944.35,435.50h1.4M964.50,435.50h1.4M17.45,446.00h1.4M37.60,446.00h1.4M57.75,446.00h1.4M98.05,446.00h1.4M118.20,446.00h1.4M138.35,446.00h1.4M158.50,446.00h1.4M198.80,446.00h1.4M218.95,446.00h1.4M239.10,446.00h1.4M259.25,446.00h1.4M299.55,446.00h1.4M319.70,446.00h1.4M339.85,446.00h1.4M360.00,446.00h1.4M400.30,446.00h1.4M420.45,446.00h1.4M440.60,446.00h1.4M460.75,446.00h1.4M501.05,446.00h1.4M521.20,446.00h1.4M541.35,446.00h1.4M561.50,446.00h1.4M601.80,446.00h1.4M621.95,446.00h1.4M642.10,446.00h1.4M662.25,446.00h1.4M702.55,446.00h1.4M722.70,446.00h1.4M742.85,446.00h1.4M763.00,446.00h1.4M803.30,446.00h1.4M823.45,446.00h1.4M843.60,446.00h1.4M863.75,446.00h1.4M904.05,446.00h1.4M924.20,446.00h1.4M944.35,446.00h1.4M964.50,446.00h1.4M17.45,456.50h1.4M37.60,456.50h1.4M57.75,456.50h1.4M98.05,456.50h1.4M118.20,456.50h1.4M138.35,456.50h1.4M158.50,456.50h1.4M198.80,456.50h1.4M218.95,456.50h1.4M239.10,456.50h1.4M259.25,456.50h1.4M299.55,456.50h1.4M319.70,456.50h1.4M339.85,456.50h1.4M360.00,456.50h1.4M400.30,456.50h1.4M420.45,456.50h1.4M440.60,456.50h1.4M460.75,456.50h1.4M501.05,456.50h1.4M521.20,456.50h1.4M541.35,456.50h1.4M561.50,456.50h1.4M601.80,456.50h1.4M621.95,456.50h1.4M642.10,456.50h1.4M662.25,456.50h1.4M702.55,456.50h1.4M722.70,456.50h1.4M742.85,456.50h1.4M763.00,456.50h1.4M803.30,456.50h1.4M823.45,456.50h1.4M843.60,456.50h1.4M863.75,456.50h1.4M904.05,456.50h1.4M924.20,456.50h1.4M944.35,456.50h1.4M964.50,456.50h1.4M17.45,472.30h1.4M37.60,472.30h1.4M57.75,472.30h1.4M98.05,472.30h1.4M118.20,472.30h1.4M138.35,472.30h1.4M158.50,472.30h1.4M198.80,472.30h1.4M218.95,472.30h1.4M239.10,472.30h1.4M259.25,472.30h1.4M299.55,472.30h1.4M319.70,472.30h1.4M339.85,472.30h1.4M360.00,472.30h1.4M400.30,472.30h1.4M420.45,472.30h1.4M440.60,472.30h1.4M460.75,472.30h1.4M501.05,472.30h1.4M521.20,472.30h1.4M541.35,472.30h1.4M561.50,472.30h1.4M601.80,472.30h1.4M621.95,472.30h1.4M642.10,472.30h1.4M662.25,472.30h1.4M702.55,472.30h1.4M722.70,472.30h1.4M742.85,472.30h1.4M763.00,472.30h1.4M803.30,472.30h1.4M823.45,472.30h1.4M843.60,472.30h1.4M863.75,472.30h1.4M904.05,472.30h1.4M924.20,472.30h1.4M944.35,472.30h1.4M964.50,472.30h1.4M17.45,482.80h1.4M37.60,482.80h1.4M57.75,482.80h1.4M98.05,482.80h1.4M118.20,482.80h1.4M138.35,482.80h1.4M158.50,482.80h1.4M198.80,482.80h1.4M218.95,482.80h1.4M239.10,482.80h1.4M259.25,482.80h1.4M299.55,482.80h1.4M319.70,482.80h1.4M339.85,482.80h1.4M360.00,482.80h1.4M400.30,482.80h1.4M420.45,482.80h1.4M440.60,482.80h1.4M460.75,482.80h1.4M501.05,482.80h1.4M521.20,482.80h1.4M541.35,482.80h1.4M561.50,482.80h1.4M601.80,482.80h1.4M621.95,482.80h1.4M642.10,482.80h1.4M662.25,482.80h1.4M702.55,482.80h1.4M722.70,482.80h1.4M742.85,482.80h1.4M763.00,482.80h1.4M803.30,482.80h1.4M823.45,482.80h1.4M843.60,482.80h1.4M863.75,482.80h1.4M904.05,482.80h1.4M924.20,482.80h1.4M944.35,482.80h1.4M964.50,482.80h1.4M17.45,493.30h1.4M37.60,493.30h1.4M57.75,493.30h1.4M98.05,493.30h1.4M118.20,493.30h1.4M138.35,493.30h1.4M158.50,493.30h1.4M198.80,493.30h1.4M218.95,493.30h1.4M239.10,493.30h1.4M259.25,493.30h1.4M299.55,493.30h1.4M319.70,493.30h1.4M339.85,493.30h1.4M360.00,493.30h1.4M400.30,493.30h1.4M420.45,493.30h1.4M440.60,493.30h1.4M460.75,493.30h1.4M501.05,493.30h1.4M521.20,493.30h1.4M541.35,493.30h1.4M561.50,493.30h1.4M601.80,493.30h1.4M621.95,493.30h1.4M642.10,493.30h1.4M662.25,493.30h1.4M702.55,493.30h1.4M722.70,493.30h1.4M742.85,493.30h1.4M763.00,493.30h1.4M803.30,493.30h1.4M823.45,493.30h1.4M843.60,493.30h1.4M863.75,493.30h1.4M904.05,493.30h1.4M924.20,493.30h1.4M944.35,493.30h1.4M964.50,493.30h1.4M17.45,503.80h1.4M37.60,503.80h1.4M57.75,503.80h1.4M98.05,503.80h1.4M118.20,503.80h1.4M138.35,503.80h1.4M158.50,503.80h1.4M198.80,503.80h1.4M218.95,503.80h1.4M239.10,503.80h1.4M259.25,503.80h1.4M299.55,503.80h1.4M319.70,503.80h1.4M339.85,503.80h1.4M360.00,503.80h1.4M400.30,503.80h1.4M420.45,503.80h1.4M440.60,503.80h1.4M460.75,503.80h1.4M501.05,503.80h1.4M521.20,503.80h1.4M541.35,503.80h1.4M561.50,503.80h1.4M601.80,503.80h1.4M621.95,503.80h1.4M642.10,503.80h1.4M662.25,503.80h1.4M702.55,503.80h1.4M722.70,503.80h1.4M742.85,503.80h1.4M763.00,503.80h1.4M803.30,503.80h1.4M823.45,503.80h1.4M843.60,503.80h1.4M863.75,503.80h1.4M904.05,503.80h1.4M924.20,503.80h1.4M944.35,503.80h1.4M964.50,503.80h1.4M17.45,514.30h1.4M37.60,514.30h1.4M57.75,514.30h1.4M98.05,514.30h1.4M118.20,514.30h1.4M138.35,514.30h1.4M158.50,514.30h1.4M198.80,514.30h1.4M218.95,514.30h1.4M239.10,514.30h1.4M259.25,514.30h1.4M299.55,514.30h1.4M319.70,514.30h1.4M339.85,514.30h1.4M360.00,514.30h1.4M400.30,514.30h1.4M420.45,514.30h1.4M440.60,514.30h1.4M460.75,514.30h1.4M501.05,514.30h1.4M521.20,514.30h1.4M541.35,514.30h1.4M561.50,514.30h1.4M601.80,514.30h1.4M621.95,514.30h1.4M642.10,514.30h1.4M662.25,514.30h1.4M702.55,514.30h1.4M722.70,514.30h1.4M742.85,514.30h1.4M763.00,514.30h1.4M803.30,514.30h1.4M823.45,514.30h1.4M843.60,514.30h1.4M863.75,514.30h1.4M904.05,514.30h1.4M924.20,514.30h1.4M944.35,514.30h1.4M964.50,514.30h1.4M17.45,524.80h1.4M37.60,524.80h1.4M57.75,524.80h1.4M98.05,524.80h1.4M118.20,524.80h1.4M138.35,524.80h1.4M158.50,524.80h1.4M198.80,524.80h1.4M218.95,524.80h1.4M239.10,524.80h1.4M259.25,524.80h1.4M299.55,524.80h1.4M319.70,524.80h1.4M339.85,524.80h1.4M360.00,524.80h1.4M400.30,524.80h1.4M420.45,524.80h1.4M440.60,524.80h1.4M460.75,524.80h1.4M501.05,524.80h1.4M521.20,524.80h1.4M541.35,524.80h1.4M561.50,524.80h1.4M601.80,524.80h1.4M621.95,524.80h1.4M642.10,524.80h1.4M662.25,524.80h1.4M702.55,524.80h1.4M722.70,524.80h1.4M742.85,524.80h1.4M763.00,524.80h1.4M803.30,524.80h1.4M823.45,524.80h1.4M843.60,524.80h1.4M863.75,524.80h1.4M904.05,524.80h1.4M924.20,524.80h1.4M944.35,524.80h1.4M964.50,524.80h1.4M17.45,535.30h1.4M37.60,535.30h1.4M57.75,535.30h1.4M98.05,535.30h1.4M118.20,535.30h1.4M138.35,535.30h1.4M158.50,535.30h1.4M198.80,535.30h1.4M218.95,535.30h1.4M239.10,535.30h1.4M259.25,535.30h1.4M299.55,535.30h1.4M319.70,535.30h1.4M339.85,535.30h1.4M360.00,535.30h1.4M400.30,535.30h1.4M420.45,535.30h1.4M440.60,535.30h1.4M460.75,535.30h1.4M501.05,535.30h1.4M521.20,535.30h1.4M541.35,535.30h1.4M561.50,535.30h1.4M601.80,535.30h1.4M621.95,535.30h1.4M642.10,535.30h1.4M662.25,535.30h1.4M702.55,535.30h1.4M722.70,535.30h1.4M742.85,535.30h1.4M763.00,535.30h1.4M803.30,535.30h1.4M823.45,535.30h1.4M843.60,535.30h1.4M863.75,535.30h1.4M904.05,535.30h1.4M924.20,535.30h1.4M944.35,535.30h1.4M964.50,535.30h1.4M17.45,545.80h1.4M37.60,545.80h1.4M57.75,545.80h1.4M98.05,545.80h1.4M118.20,545.80h1.4M138.35,545.80h1.4M158.50,545.80h1.4M198.80,545.80h1.4M218.95,545.80h1.4M239.10,545.80h1.4M259.25,545.80h1.4M299.55,545.80h1.4M319.70,545.80h1.4M339.85,545.80h1.4M360.00,545.80h1.4M400.30,545.80h1.4M420.45,545.80h1.4M440.60,545.80h1.4M460.75,545.80h1.4M501.05,545.80h1.4M521.20,545.80h1.4M541.35,545.80h1.4M561.50,545.80h1.4M601.80,545.80h1.4M621.95,545.80h1.4M642.10,545.80h1.4M662.25,545.80h1.4M702.55,545.80h1.4M722.70,545.80h1.4M742.85,545.80h1.4M763.00,545.80h1.4M803.30,545.80h1.4M823.45,545.80h1.4M843.60,545.80h1.4M863.75,545.80h1.4M904.05,545.80h1.4M924.20,545.80h1.4M944.35,545.80h1.4M964.50,545.80h1.4M17.45,556.30h1.4M37.60,556.30h1.4M57.75,556.30h1.4M98.05,556.30h1.4M118.20,556.30h1.4M138.35,556.30h1.4M158.50,556.30h1.4M198.80,556.30h1.4M218.95,556.30h1.4M239.10,556.30h1.4M259.25,556.30h1.4M299.55,556.30h1.4M319.70,556.30h1.4M339.85,556.30h1.4M360.00,556.30h1.4M400.30,556.30h1.4M420.45,556.30h1.4M440.60,556.30h1.4M460.75,556.30h1.4M501.05,556.30h1.4M521.20,556.30h1.4M541.35,556.30h1.4M561.50,556.30h1.4M601.80,556.30h1.4M621.95,556.30h1.4M642.10,556.30h1.4M662.25,556.30h1.4M702.55,556.30h1.4M722.70,556.30h1.4M742.85,556.30h1.4M763.00,556.30h1.4M803.30,556.30h1.4M823.45,556.30h1.4M843.60,556.30h1.4M863.75,556.30h1.4M904.05,556.30h1.4M924.20,556.30h1.4M944.35,556.30h1.4M964.50,556.30h1.4M17.45,566.80h1.4M37.60,566.80h1.4M57.75,566.80h1.4M98.05,566.80h1.4M118.20,566.80h1.4M138.35,566.80h1.4M158.50,566.80h1.4M198.80,566.80h1.4M218.95,566.80h1.4M239.10,566.80h1.4M259.25,566.80h1.4M299.55,566.80h1.4M319.70,566.80h1.4M339.85,566.80h1.4M360.00,566.80h1.4M400.30,566.80h1.4M420.45,566.80h1.4M440.60,566.80h1.4M460.75,566.80h1.4M501.05,566.80h1.4M521.20,566.80h1.4M541.35,566.80h1.4M561.50,566.80h1.4M601.80,566.80h1.4M621.95,566.80h1.4M642.10,566.80h1.4M662.25,566.80h1.4M702.55,566.80h1.4M722.70,566.80h1.4M742.85,566.80h1.4M763.00,566.80h1.4M803.30,566.80h1.4M823.45,566.80h1.4M843.60,566.80h1.4M863.75,566.80h1.4M904.05,566.80h1.4M924.20,566.80h1.4M944.35,566.80h1.4M964.50,566.80h1.4" stroke="#b8b8b8" stroke-width="1.4" fill="none"/>
<path d="M78.60,44V560M179.35,44V560M280.10,44V560M380.85,44V560M582.35,44V560M683.10,44V560M783.85,44V560M884.60,44V560M985.35,44V560" stroke="#bcbcbc" stroke-width="1" stroke-dasharray="1.2,1.6" fill="none"/>
<line x1="7" y1="150.1" x2="1015" y2="150.1" stroke="#6c6c6c" stroke-width="1.6"/>
<line x1="7" y1="256.2" x2="1015" y2="256.2" stroke="#6c6c6c" stroke-width="1.6"/>
<line x1="7" y1="361.6" x2="1015" y2="361.6" stroke="#6c6c6c" stroke-width="1.6"/>
<line x1="7" y1="467.1" x2="1015" y2="467.1" stroke="#6c6c6c" stroke-width="1.6"/>
<line x1="7" y1="238.6" x2="1015" y2="238.6" stroke="#555" stroke-width="1.3" stroke-dasharray="3,3"/>
<line x1="7" y1="456.4" x2="1015" y2="456.4" stroke="#6a6a6a" stroke-width="1.2" stroke-dasharray="3,3"/>
<line x1="7" y1="545.4" x2="1015" y2="545.4" stroke="#6a6a6a" stroke-width="1.2" stroke-dasharray="3,3"/>
<line x1="481.8" y1="50" x2="481.8" y2="572" stroke="#4c4c4c" stroke-width="1.6" stroke-dasharray="3,3"/>
<polygon points="475.3,44 488.2,44 481.75,50.5" fill="#f39322"/>
<polyline points="7.0,79.26 9.0,79.21 11.0,79.29 13.0,79.15 15.0,79.22 17.0,79.16 19.0,79.08 21.0,79.14 23.0,79.03 25.0,79.08 27.0,78.99 29.0,78.97 31.0,79.01 33.0,79.07 35.0,78.91 37.0,78.91 39.0,78.96 41.0,79.01 43.0,78.91 45.0,78.85 47.0,78.94 49.0,78.74 51.0,78.87 53.0,78.74 55.0,78.69 57.0,78.66 59.0,78.67 61.0,78.75 63.0,78.60 65.0,78.66 67.0,78.65 69.0,78.57 71.0,78.59 73.0,78.47 75.0,78.44 77.0,78.45 79.0,78.52 81.0,78.45 83.0,78.40 85.0,78.44 87.0,78.39 89.0,78.33 91.0,78.41 93.0,78.37 95.0,78.26 97.0,78.30 99.0,78.27 101.0,78.31 103.0,78.26 105.0,78.15 107.0,78.27 109.0,78.07 111.0,78.11 113.0,78.15 115.0,78.01 117.0,78.06 119.0,77.94 121.0,78.05 123.0,78.04 125.0,77.98 127.0,78.02 129.0,77.89 131.0,77.94 133.0,77.90 135.0,77.87 137.0,77.82 139.0,77.88 141.0,77.88 143.0,77.76 145.0,77.77 147.0,77.63 149.0,77.74 151.0,77.70 153.0,77.75 155.0,77.69 157.0,77.56 159.0,77.56 161.0,77.60 163.0,77.44 165.0,77.51 167.0,77.43 169.0,77.39 171.0,77.36 173.0,77.48 175.0,77.33 177.0,77.33 179.0,77.34 181.0,77.41 183.0,77.23 185.0,77.28 187.0,77.28 189.0,77.32 191.0,77.29 193.0,77.27 195.0,77.13 197.0,77.14 199.0,77.10 201.0,77.19 203.0,77.18 205.0,76.99 207.0,76.98 209.0,76.97 211.0,76.94 213.0,76.97 215.0,76.97 217.0,76.88 219.0,76.81 221.0,76.87 223.0,76.84 225.0,76.85 227.0,76.91 229.0,76.83 231.0,76.77 233.0,76.77 235.0,76.76 237.0,76.61 239.0,76.76 241.0,76.71 243.0,76.71 245.0,76.67 247.0,76.57 249.0,76.55 251.0,76.47 253.0,76.55 255.0,76.41 257.0,76.40 259.0,76.42 261.0,76.39 263.0,76.41 265.0,76.34 267.0,76.32 269.0,76.34 271.0,76.31 273.0,76.35 275.0,76.27 277.0,76.43 279.0,76.36 281.0,76.26 283.0,76.26 285.0,76.27 287.0,76.26 289.0,76.20 291.0,76.33 293.0,76.35 295.0,76.23 297.0,76.22 299.0,76.12 301.0,76.11 303.0,76.15 305.0,76.12 307.0,76.22 309.0,76.07 311.0,76.03 313.0,76.20 315.0,76.11 317.0,76.02 319.0,76.08 321.0,75.97 323.0,76.05 325.0,76.13 327.0,76.09 329.0,76.05 331.0,75.95 333.0,75.95 335.0,75.90 337.0,76.01 339.0,75.95 341.0,75.98 343.0,75.88 345.0,75.84 347.0,75.95 349.0,75.97 351.0,75.93 353.0,75.91 355.0,75.90 357.0,75.87 359.0,75.75 361.0,75.80 363.0,75.75 365.0,75.67 367.0,75.66 369.0,75.70 371.0,75.68 373.0,75.75 375.0,75.79 377.0,75.68 379.0,75.76 381.0,75.76 383.0,75.74 385.0,75.61 387.0,75.56 389.0,75.55 391.0,75.53 393.0,75.52 395.0,75.59 397.0,75.63 399.0,75.61 401.0,75.52 403.0,75.54 405.0,75.56 407.0,75.40 409.0,75.51 411.0,75.54 413.0,75.50 415.0,75.48 417.0,75.42 419.0,75.34 421.0,75.45 423.0,75.35 425.0,75.43 427.0,75.45 429.0,75.32 431.0,75.31 433.0,75.40 435.0,75.34 437.0,75.22 439.0,75.20 441.0,75.19 443.0,75.33 445.0,75.29 447.0,75.15 449.0,75.27 451.0,75.29 453.0,75.21 455.0,75.14 457.0,75.16 459.0,75.07 461.0,75.03 463.0,75.21 465.0,75.13 467.0,75.09 469.0,75.16 471.0,75.05 473.0,75.12 475.0,75.10 477.0,74.96 479.0,74.96 481.0,74.93 483.0,74.85 485.0,74.85 487.0,74.75 489.0,74.78 491.0,74.72 493.0,74.88 495.0,74.76 497.0,74.78 499.0,74.81 501.0,74.87 503.0,74.77 505.0,74.87 507.0,74.78 509.0,74.79 511.0,74.79 513.0,74.68 515.0,74.77 517.0,74.71 519.0,74.68 521.0,74.83 523.0,74.71 525.0,74.77 527.0,74.81 529.0,74.78 531.0,74.73 533.0,74.77 535.0,74.77 537.0,74.82 539.0,74.68 541.0,74.77 543.0,74.71 545.0,74.71 547.0,74.81 549.0,74.75 551.0,74.76 553.0,74.80 555.0,74.83 557.0,74.73 559.0,74.77 561.0,74.74 563.0,74.74 565.0,74.78 567.0,74.73 569.0,74.74 571.0,74.73 573.0,74.82 575.0,74.77 577.0,74.81 579.0,74.82 581.0,74.68 583.0,74.74 585.0,74.81 587.0,74.79 589.0,74.65 591.0,74.64 593.0,74.71 595.0,74.63 597.0,74.66 599.0,74.63 601.0,74.75 603.0,74.77 605.0,74.79 607.0,74.64 609.0,74.75 611.0,74.74 613.0,74.63 615.0,74.78 617.0,74.79 619.0,74.64 621.0,74.79 623.0,74.68 625.0,74.69 627.0,74.79 629.0,74.76 631.0,74.62 633.0,74.68 635.0,74.69 637.0,74.65 639.0,74.62 641.0,74.65 643.0,74.73 645.0,74.58 647.0,74.69 649.0,74.66 651.0,74.58 653.0,74.64 655.0,74.70 657.0,74.67 659.0,74.58 661.0,74.76 663.0,74.72 665.0,74.76 667.0,74.58 669.0,74.61 671.0,74.57 673.0,74.71 675.0,74.61 677.0,74.58 679.0,74.64 681.0,74.73 683.0,74.71 685.0,74.60 687.0,74.58 689.0,74.73 691.0,74.66 693.0,74.68 695.0,74.56 697.0,74.55 699.0,74.68 701.0,74.62 703.0,74.55 705.0,74.72 707.0,74.66 709.0,74.69 711.0,74.55 713.0,74.70 715.0,74.54 717.0,74.70 719.0,74.61 721.0,74.59 723.0,74.63 725.0,74.70 727.0,74.57 729.0,74.54 731.0,74.62 733.0,74.56 735.0,74.53 737.0,74.54 739.0,74.52 741.0,74.55 743.0,74.57 745.0,74.57 747.0,74.65 749.0,74.56 751.0,74.60 753.0,74.53 755.0,74.57 757.0,74.50 759.0,74.54 761.0,74.50 763.0,74.64 765.0,74.60 767.0,74.53 769.0,74.58 771.0,74.67 773.0,74.50 775.0,74.65 777.0,74.57 779.0,74.58 781.0,74.64 783.0,74.55 785.0,74.58 787.0,74.61 789.0,74.67 791.0,74.54 793.0,74.63 795.0,74.61 797.0,74.59 799.0,74.54 801.0,74.53 803.0,74.47 805.0,74.48 807.0,74.47 809.0,74.60 811.0,74.51 813.0,74.49 815.0,74.47 817.0,74.62 819.0,74.62 821.0,74.58 823.0,74.50 825.0,74.49 827.0,74.50 829.0,74.53 831.0,74.47 833.0,74.53 835.0,74.49 837.0,74.63 839.0,74.63 841.0,74.54 843.0,74.48 845.0,74.62 847.0,74.49 849.0,74.50 851.0,74.42 853.0,74.50 855.0,74.52 857.0,74.52 859.0,74.46 861.0,74.52 863.0,74.42 865.0,74.47 867.0,74.43 869.0,74.49 871.0,74.42 873.0,74.41 875.0,74.47 877.0,74.45 879.0,74.52 881.0,74.51 883.0,74.55 885.0,74.53 887.0,74.54 889.0,74.57 891.0,74.47 893.0,74.46 895.0,74.59 897.0,74.42 899.0,74.53 901.0,74.51 903.0,74.39 905.0,74.55 907.0,74.56 909.0,74.51 911.0,74.53 913.0,74.54 915.0,74.40 917.0,74.48 919.0,74.47 921.0,74.54 923.0,74.53 925.0,74.53 927.0,74.48 929.0,74.54 931.0,74.50 933.0,74.50 935.0,74.41 937.0,74.37 939.0,74.38 941.0,74.43 943.0,74.38 945.0,74.52 947.0,74.46 949.0,74.48 951.0,74.47 953.0,74.48 955.0,74.44 957.0,74.34 959.0,74.50 961.0,74.49 963.0,74.44 965.0,74.44 967.0,74.47 969.0,74.35 971.0,74.48 973.0,74.38 975.0,74.35 977.0,74.38 979.0,74.47 981.0,74.37 983.0,74.47 985.0,74.52 987.0,74.42 989.0,74.40 991.0,74.41 993.0,74.45 995.0,74.47 997.0,74.44 999.0,74.44 1001.0,74.33 1003.0,74.34 1005.0,74.36 1007.0,74.45 1009.0,74.37 1011.0,74.42 1013.0,74.30 1015.0,74.31" fill="none" stroke="#8fca55" stroke-width="1.6"/>
<path d="M44,78.9h6M56,78.7h5M59,78.7h6M83,78.4h6M101,78.2h4M113,78.1h2M134,77.9h4M137,77.8h8M152,77.7h7M179,77.4h2M182,77.3h7M230,76.8h7M239,76.7h8M245,76.6h6M248,76.6h5M278,76.3h7M305,76.2h3M329,76.0h8M347,75.9h4M368,75.7h3M389,75.6h5M404,75.5h5M434,75.3h8M452,75.2h8M455,75.2h6M467,75.1h4M479,75.0h4M497,74.8h4M521,74.8h5M530,74.8h5M539,74.8h3M551,74.8h4M563,74.7h4M617,74.7h5M620,74.7h2M626,74.7h2M644,74.7h2M662,74.7h7M677,74.7h2M689,74.6h8M707,74.6h5M749,74.6h3M782,74.6h8M794,74.6h8M854,74.5h3M881,74.5h2M887,74.5h2M902,74.5h5M920,74.5h8M956,74.4h4M977,74.4h5M998,74.4h6" stroke="#6fae2e" stroke-width="1.2" fill="none"/>
<line x1="487" y1="66.6" x2="487" y2="75" stroke="#9dbb80" stroke-width="1.2"/>
<line x1="35" y1="138.8" x2="1015" y2="138.8" stroke="#b4ecf0" stroke-width="1.6"/>
<line x1="35" y1="138.8" x2="1015" y2="138.8" stroke="#40c2ca" stroke-width="1.6" stroke-dasharray="3.8,2.2"/>
<line x1="7" y1="138.8" x2="9" y2="138.8" stroke="#3cc8d0" stroke-width="1.5"/>
<polyline points="7.0,226.98 8.0,226.74 9.0,226.94 10.0,226.59 11.0,226.88 12.0,226.62 13.0,226.49 14.0,226.79 15.0,226.88 16.0,226.37 17.0,226.65 18.0,226.65 19.0,226.40 20.0,226.48 21.0,226.33 22.0,226.36 23.0,226.38 24.0,226.58 25.0,226.60 26.0,226.32 27.0,226.19 28.0,226.37 29.0,226.57 30.0,226.26 31.0,226.33 32.0,226.25 33.0,226.60 34.0,226.44 35.0,226.13 36.0,226.15 37.0,226.31 38.0,226.39 39.0,226.44 40.0,226.10 41.0,226.13 42.0,226.44 43.0,226.26 44.0,226.17 45.0,226.17 46.0,226.55 47.0,226.15 48.0,226.30 49.0,226.16 50.0,226.18 51.0,226.44 52.0,226.51 53.0,226.12 54.0,226.01 55.0,226.32 56.0,225.99 57.0,225.86 58.0,226.39 59.0,226.09 60.0,226.32 61.0,226.06 62.0,226.33 63.0,226.07 64.0,225.88 65.0,225.78 66.0,226.09 67.0,226.13 68.0,226.28 69.0,225.78 70.0,226.09 71.0,225.93 72.0,226.00 73.0,225.77 74.0,225.84 75.0,225.98 76.0,226.21 77.0,225.71 78.0,225.92 79.0,226.10 80.0,226.19 81.0,225.72 82.0,225.66 83.0,226.14 84.0,226.15 85.0,225.84 86.0,225.58 87.0,226.09 88.0,225.75 89.0,226.05 90.0,225.87 91.0,225.98 92.0,225.57 93.0,225.94 94.0,225.59 95.0,225.69 96.0,225.94 97.0,225.92 98.0,225.52 99.0,225.53 100.0,225.63 101.0,225.69 102.0,225.60 103.0,225.43 104.0,225.50 105.0,225.77 106.0,225.87 107.0,225.34 108.0,225.64 109.0,225.75 110.0,225.31 111.0,225.78 112.0,225.33 113.0,225.61 114.0,225.57 115.0,225.61 116.0,225.40 117.0,225.46 118.0,225.55 119.0,225.44 120.0,225.57 121.0,225.43 122.0,225.42 123.0,225.16 124.0,225.50 125.0,225.41 126.0,225.25 127.0,225.56 128.0,225.56 129.0,225.35 130.0,225.17 131.0,225.34 132.0,225.11 133.0,225.11 134.0,225.28 135.0,225.07 136.0,225.27 137.0,225.30 138.0,225.00 139.0,225.35 140.0,225.01 141.0,225.39 142.0,225.40 143.0,225.23 144.0,224.95 145.0,225.21 146.0,225.12 147.0,225.45 148.0,224.95 149.0,225.38 150.0,225.45 151.0,225.28 152.0,225.32 153.0,224.93 154.0,225.40 155.0,225.09 156.0,225.36 157.0,225.32 158.0,224.86 159.0,225.23 160.0,225.30 161.0,224.77 162.0,224.93 163.0,225.16 164.0,224.79 165.0,225.23 166.0,224.84 167.0,225.16 168.0,224.74 169.0,224.95 170.0,225.19 171.0,224.75 172.0,224.77 173.0,224.90 174.0,224.78 175.0,224.60 176.0,224.68 177.0,224.65 178.0,225.11 179.0,224.94 180.0,225.06 181.0,224.62 182.0,224.97 183.0,224.56 184.0,224.80 185.0,224.85 186.0,224.68 187.0,224.97 188.0,224.77 189.0,224.78 190.0,224.95 191.0,224.47 192.0,224.99 193.0,224.76 194.0,224.61 195.0,224.84 196.0,224.51 197.0,224.94 198.0,224.68 199.0,224.54 200.0,224.77 201.0,224.56 202.0,224.39 203.0,224.72 204.0,224.29 205.0,224.75 206.0,224.40 207.0,224.62 208.0,224.81 209.0,224.56 210.0,224.60 211.0,224.38 212.0,224.18 213.0,224.19 214.0,224.25 215.0,224.52 216.0,224.39 217.0,224.43 218.0,224.65 219.0,224.18 220.0,224.23 221.0,224.47 222.0,224.08 223.0,224.06 224.0,224.26 225.0,224.10 226.0,224.24 227.0,224.15 228.0,224.35 229.0,224.35 230.0,224.11 231.0,224.35 232.0,224.25 233.0,224.03 234.0,224.50 235.0,224.08 236.0,224.01 237.0,223.96 238.0,224.28 239.0,224.41 240.0,224.34 241.0,224.11 242.0,224.01 243.0,223.85 244.0,224.22 245.0,224.16 246.0,224.02 247.0,224.19 248.0,224.05 249.0,224.34 250.0,224.21 251.0,223.90 252.0,224.29 253.0,223.76 254.0,224.04 255.0,223.96 256.0,223.84 257.0,223.73 258.0,224.15 259.0,223.68 260.0,223.99 261.0,224.21 262.0,223.72 263.0,223.75 264.0,223.98 265.0,223.91 266.0,223.98 267.0,224.07 268.0,223.68 269.0,223.75 270.0,223.73 271.0,223.57 272.0,224.06 273.0,223.99 274.0,223.94 275.0,223.50 276.0,223.99 277.0,223.92 278.0,223.74 279.0,223.90 280.0,223.71 281.0,223.57 282.0,223.48 283.0,223.55 284.0,223.42 285.0,223.59 286.0,223.83 287.0,223.78 288.0,223.86 289.0,223.77 290.0,223.49 291.0,223.65 292.0,223.57 293.0,223.77 294.0,223.60 295.0,223.44 296.0,223.65 297.0,223.84 298.0,223.38 299.0,223.76 300.0,223.23 301.0,223.37 302.0,223.34 303.0,223.64 304.0,223.75 305.0,223.62 306.0,223.36 307.0,223.68 308.0,223.33 309.0,223.27 310.0,223.66 311.0,223.48 312.0,223.51 313.0,223.48 314.0,223.66 315.0,223.34 316.0,223.55 317.0,223.46 318.0,223.54 319.0,223.28 320.0,223.44 321.0,223.34 322.0,223.17 323.0,223.10 324.0,223.34 325.0,223.00 326.0,223.49 327.0,223.02 328.0,222.94 329.0,222.97 330.0,223.46 331.0,223.10 332.0,222.96 333.0,222.88 334.0,222.88 335.0,223.26 336.0,223.21 337.0,223.24 338.0,223.25 339.0,222.84 340.0,223.15 341.0,223.00 342.0,223.26 343.0,223.25 344.0,223.28 345.0,222.78 346.0,223.25 347.0,223.26 348.0,223.27 349.0,222.76 350.0,222.81 351.0,222.74 352.0,222.68 353.0,223.16 354.0,223.13 355.0,223.01 356.0,223.11 357.0,222.99 358.0,222.77 359.0,222.65 360.0,222.63 361.0,223.02 362.0,222.68 363.0,222.73 364.0,222.79 365.0,222.53 366.0,222.66 367.0,222.67 368.0,222.92 369.0,222.70 370.0,222.66 371.0,223.03 372.0,222.75 373.0,222.94 374.0,222.79 375.0,222.43 376.0,222.65 377.0,222.65 378.0,222.84 379.0,222.58 380.0,222.78 381.0,222.67 382.0,222.47 383.0,222.84 384.0,222.37 385.0,222.80 386.0,222.39 387.0,222.28 388.0,222.39 389.0,222.72 390.0,222.84 391.0,222.24 392.0,222.52 393.0,222.51 394.0,222.68 395.0,222.31 396.0,222.48 397.0,222.38 398.0,222.66 399.0,222.31 400.0,222.71 401.0,222.30 402.0,222.25 403.0,222.53 404.0,222.40 405.0,222.15 406.0,222.46 407.0,222.11 408.0,222.53 409.0,222.46 410.0,222.50 411.0,222.40 412.0,222.22 413.0,222.24 414.0,222.23 415.0,222.51 416.0,222.02 417.0,222.49 418.0,221.96 419.0,222.06 420.0,222.08 421.0,222.45 422.0,222.20 423.0,222.12 424.0,222.41 425.0,222.01 426.0,222.14 427.0,222.17 428.0,222.29 429.0,222.28 430.0,222.20 431.0,222.01 432.0,221.99 433.0,221.88 434.0,222.28 435.0,222.16 436.0,222.20 437.0,221.84 438.0,221.99 439.0,222.18 440.0,222.05 441.0,221.77 442.0,221.96 443.0,222.21 444.0,221.81 445.0,221.77 446.0,221.82 447.0,222.05 448.0,222.13 449.0,221.70 450.0,221.69 451.0,221.74 452.0,221.77 453.0,221.88 454.0,221.65 455.0,221.74 456.0,221.65 457.0,222.11 458.0,221.95 459.0,221.56 460.0,222.07 461.0,221.54 462.0,221.70 463.0,222.05 464.0,221.92 465.0,221.88 466.0,221.69 467.0,221.53 468.0,221.79 469.0,221.46 470.0,221.51 471.0,221.60 472.0,221.38 473.0,221.59 474.0,221.81 475.0,221.74 476.0,221.62 477.0,221.69 478.0,221.57 479.0,221.37 480.0,221.64 481.0,221.51 482.0,221.70 483.0,221.79 484.0,221.49 485.0,221.56 486.0,221.66 487.0,227.52 488.0,227.76 489.0,228.38 490.0,228.80 491.0,229.04 492.0,229.29 493.0,229.66 494.0,229.82 495.0,230.05 496.0,230.19 497.0,230.34 498.0,230.75 499.0,230.65 500.0,231.05 501.0,231.46 502.0,231.61 503.0,231.74 504.0,231.68 505.0,231.95 506.0,232.13 507.0,232.39 508.0,232.40 509.0,232.70 510.0,232.99 511.0,232.67 512.0,233.08 513.0,233.27 514.0,233.15 515.0,233.32 516.0,233.72 517.0,233.26 518.0,233.65 519.0,233.52 520.0,233.98 521.0,234.16 522.0,233.99 523.0,233.82 524.0,234.18 525.0,234.23 526.0,234.40 527.0,234.35 528.0,234.49 529.0,234.66 530.0,234.54 531.0,234.53 532.0,234.91 533.0,234.52 534.0,234.85 535.0,234.73 536.0,235.00 537.0,234.66 538.0,235.22 539.0,234.89 540.0,234.75 541.0,234.92 542.0,235.03 543.0,234.84 544.0,235.12 545.0,235.15 546.0,235.35 547.0,235.17 548.0,235.15 549.0,235.16 550.0,235.50 551.0,235.65 552.0,235.42 553.0,235.27 554.0,235.64 555.0,235.42 556.0,235.34 557.0,235.31 558.0,235.72 559.0,235.76 560.0,235.68 561.0,235.60 562.0,235.67 563.0,235.49 564.0,235.95 565.0,235.61 566.0,235.79 567.0,235.92 568.0,235.94 569.0,235.74 570.0,235.65 571.0,235.82 572.0,235.58 573.0,236.02 574.0,235.75 575.0,236.06 576.0,235.73 577.0,235.81 578.0,235.75 579.0,235.86 580.0,235.73 581.0,235.63 582.0,236.08 583.0,235.82 584.0,235.81 585.0,235.86 586.0,235.98 587.0,235.96 588.0,236.09 589.0,236.12 590.0,235.95 591.0,236.30 592.0,236.26 593.0,235.80 594.0,236.27 595.0,236.32 596.0,236.26 597.0,235.88 598.0,236.31 599.0,236.20 600.0,235.83 601.0,235.84 602.0,236.41 603.0,236.24 604.0,236.01 605.0,235.93 606.0,235.96 607.0,236.02 608.0,236.36 609.0,236.11 610.0,236.00 611.0,236.46 612.0,236.40 613.0,236.03 614.0,236.47 615.0,236.31 616.0,236.42 617.0,236.36 618.0,236.50 619.0,236.44 620.0,236.48 621.0,236.10 622.0,236.41 623.0,236.32 624.0,236.45 625.0,236.27 626.0,236.55 627.0,236.36 628.0,236.19 629.0,236.18 630.0,236.12 631.0,236.34 632.0,236.09 633.0,236.34 634.0,236.15 635.0,236.37 636.0,236.38 637.0,236.41 638.0,236.61 639.0,236.10 640.0,236.60 641.0,236.39 642.0,236.45 643.0,236.52 644.0,236.63 645.0,236.35 646.0,236.38 647.0,236.71 648.0,236.19 649.0,236.53 650.0,236.53 651.0,236.18 652.0,236.53 653.0,236.58 654.0,236.73 655.0,236.38 656.0,236.77 657.0,236.49 658.0,236.48 659.0,236.74 660.0,236.22 661.0,236.64 662.0,236.59 663.0,236.42 664.0,236.74 665.0,236.45 666.0,236.52 667.0,236.55 668.0,236.70 669.0,236.37 670.0,236.51 671.0,236.51 672.0,236.59 673.0,236.76 674.0,236.44 675.0,236.77 676.0,236.52 677.0,236.58 678.0,236.45 679.0,236.59 680.0,236.88 681.0,236.69 682.0,236.78 683.0,236.50 684.0,236.50 685.0,236.49 686.0,236.67 687.0,236.70 688.0,236.80 689.0,236.35 690.0,236.77 691.0,236.87 692.0,236.67 693.0,236.38 694.0,236.53 695.0,236.36 696.0,236.47 697.0,236.91 698.0,236.73 699.0,236.76 700.0,236.85 701.0,236.92 702.0,236.75 703.0,236.75 704.0,236.76 705.0,236.81 706.0,236.75 707.0,236.81 708.0,236.53 709.0,236.80 710.0,236.68 711.0,236.87 712.0,236.48 713.0,236.53 714.0,236.44 715.0,236.89 716.0,236.98 717.0,236.83 718.0,236.66 719.0,236.93 720.0,236.91 721.0,236.78 722.0,236.60 723.0,236.63 724.0,236.71 725.0,236.65 726.0,236.72 727.0,236.85 728.0,237.03 729.0,236.50 730.0,236.81 731.0,236.50 732.0,236.55 733.0,236.97 734.0,236.83 735.0,237.04 736.0,236.76 737.0,236.50 738.0,236.73 739.0,236.86 740.0,237.07 741.0,237.10 742.0,236.79 743.0,236.76 744.0,236.58 745.0,236.90 746.0,236.65 747.0,236.61 748.0,236.54 749.0,236.53 750.0,236.94 751.0,236.61 752.0,237.12 753.0,236.59 754.0,237.06 755.0,236.62 756.0,236.56 757.0,236.98 758.0,236.70 759.0,237.00 760.0,236.67 761.0,236.59 762.0,237.03 763.0,236.99 764.0,237.08 765.0,237.01 766.0,236.62 767.0,236.95 768.0,237.00 769.0,236.86 770.0,237.14 771.0,236.74 772.0,237.17 773.0,237.02 774.0,236.60 775.0,236.61 776.0,236.99 777.0,237.09 778.0,236.65 779.0,236.79 780.0,237.05 781.0,236.71 782.0,237.13 783.0,236.91 784.0,236.65 785.0,236.84 786.0,236.97 787.0,236.89 788.0,237.03 789.0,236.72 790.0,237.11 791.0,236.85 792.0,237.02 793.0,237.01 794.0,236.89 795.0,236.87 796.0,237.11 797.0,237.21 798.0,237.12 799.0,236.99 800.0,236.83 801.0,236.69 802.0,237.24 803.0,237.08 804.0,237.16 805.0,236.86 806.0,237.03 807.0,237.25 808.0,237.17 809.0,237.03 810.0,236.86 811.0,236.93 812.0,237.21 813.0,236.90 814.0,237.09 815.0,237.04 816.0,237.22 817.0,237.17 818.0,236.86 819.0,236.69 820.0,236.85 821.0,236.95 822.0,237.05 823.0,237.19 824.0,237.23 825.0,236.72 826.0,237.20 827.0,237.19 828.0,237.22 829.0,237.05 830.0,236.87 831.0,237.22 832.0,237.20 833.0,237.12 834.0,237.26 835.0,236.92 836.0,236.77 837.0,237.05 838.0,237.20 839.0,236.84 840.0,237.17 841.0,237.29 842.0,236.87 843.0,237.09 844.0,237.14 845.0,237.01 846.0,236.86 847.0,236.89 848.0,237.19 849.0,237.21 850.0,237.02 851.0,236.79 852.0,237.23 853.0,237.21 854.0,236.89 855.0,237.10 856.0,237.29 857.0,237.28 858.0,237.07 859.0,237.04 860.0,237.11 861.0,236.87 862.0,236.87 863.0,236.87 864.0,237.18 865.0,236.98 866.0,237.10 867.0,237.01 868.0,237.08 869.0,236.86 870.0,236.80 871.0,237.37 872.0,237.00 873.0,236.84 874.0,237.15 875.0,237.25 876.0,236.87 877.0,237.14 878.0,236.99 879.0,237.09 880.0,236.79 881.0,236.80 882.0,237.38 883.0,237.31 884.0,237.08 885.0,237.13 886.0,236.95 887.0,237.26 888.0,237.05 889.0,237.36 890.0,237.26 891.0,237.29 892.0,237.38 893.0,236.95 894.0,236.82 895.0,236.92 896.0,236.91 897.0,236.85 898.0,236.83 899.0,237.14 900.0,237.33 901.0,237.08 902.0,237.38 903.0,237.36 904.0,236.85 905.0,237.17 906.0,237.05 907.0,236.89 908.0,237.39 909.0,236.97 910.0,237.16 911.0,237.20 912.0,237.39 913.0,237.22 914.0,237.06 915.0,237.09 916.0,236.92 917.0,237.40 918.0,237.42 919.0,236.96 920.0,236.85 921.0,236.98 922.0,237.04 923.0,237.37 924.0,237.37 925.0,237.34 926.0,236.86 927.0,237.31 928.0,237.26 929.0,237.22 930.0,237.43 931.0,236.87 932.0,236.93 933.0,237.29 934.0,237.41 935.0,237.25 936.0,237.02 937.0,237.20 938.0,237.30 939.0,236.91 940.0,237.04 941.0,237.00 942.0,236.92 943.0,237.14 944.0,236.95 945.0,236.99 946.0,236.94 947.0,237.26 948.0,236.86 949.0,237.29 950.0,236.97 951.0,236.88 952.0,237.41 953.0,236.99 954.0,237.42 955.0,237.38 956.0,237.39 957.0,236.95 958.0,237.13 959.0,236.92 960.0,237.42 961.0,237.37 962.0,237.24 963.0,237.14 964.0,237.07 965.0,237.36 966.0,237.16 967.0,237.25 968.0,236.96 969.0,237.00 970.0,236.91 971.0,237.30 972.0,237.21 973.0,236.96 974.0,237.40 975.0,237.04 976.0,237.12 977.0,236.97 978.0,237.04 979.0,237.38 980.0,237.08 981.0,236.98 982.0,237.18 983.0,237.07 984.0,237.42 985.0,236.95 986.0,237.47 987.0,236.92 988.0,237.42 989.0,237.29 990.0,237.01 991.0,237.17 992.0,237.06 993.0,237.04 994.0,237.01 995.0,237.11 996.0,237.48 997.0,237.49 998.0,237.45 999.0,236.95 1000.0,237.07 1001.0,237.43 1002.0,236.93 1003.0,237.33 1004.0,237.07 1005.0,237.48 1006.0,236.91 1007.0,237.38 1008.0,237.10 1009.0,236.98 1010.0,236.90 1011.0,237.40 1012.0,237.22 1013.0,237.01 1014.0,237.16 1015.0,237.45" fill="none" stroke="#9a1a1a" stroke-width="2.2"/>
<path d="M7,225.4h1M8,225.4h1M10,225.4h1M11,225.4h1M16,225.3h1M21,225.2h1M27,227.8h1M30,225.2h1M31,227.7h1M32,227.7h1M33,227.7h1M34,227.7h1M37,227.7h1M39,227.7h1M43,227.6h1M46,225.0h1M48,225.0h1M51,224.9h1M52,224.9h1M53,227.5h1M54,224.9h1M55,224.9h1M56,227.5h1M59,224.8h1M61,224.8h1M62,227.4h1M63,224.8h1M64,224.8h1M66,224.8h1M67,227.3h1M69,224.7h1M71,227.3h1M74,224.7h1M76,224.7h1M82,227.2h1M84,224.6h1M87,227.1h1M89,224.5h1M91,227.1h1M92,224.5h1M93,227.1h1M101,227.0h1M106,224.3h1M107,224.3h1M108,224.3h1M109,226.9h1M110,224.3h1M111,226.9h1M112,224.3h1M113,224.3h1M117,224.2h1M119,226.8h1M123,226.7h1M124,226.7h1M126,226.7h1M127,226.7h1M128,226.7h1M130,226.7h1M131,224.1h1M132,226.6h1M133,226.6h1M135,224.0h1M137,224.0h1M139,224.0h1M142,223.9h1M147,226.5h1M148,223.9h1M156,223.8h1M157,223.8h1M158,223.8h1M159,223.8h1M160,226.3h1M163,226.3h1M165,226.3h1M166,226.3h1M170,226.2h1M171,226.2h1M172,226.2h1M174,226.2h1M176,226.2h1M177,223.6h1M179,226.1h1M182,226.1h1M184,226.1h1M190,226.0h1M191,226.0h1M192,223.4h1M195,226.0h1M199,223.3h1M201,225.9h1M207,225.8h1M208,223.2h1M211,225.8h1M216,223.1h1M219,223.1h1M220,223.1h1M223,223.1h1M225,223.0h1M226,223.0h1M228,223.0h1M231,225.6h1M237,222.9h1M238,222.9h1M239,222.9h1M240,222.9h1M241,225.5h1M245,222.8h1M248,222.8h1M249,222.8h1M250,222.8h1M253,222.7h1M254,225.3h1M255,222.7h1M259,222.7h1M260,222.7h1M261,222.6h1M262,225.2h1M263,225.2h1M265,222.6h1M266,225.2h1M269,225.2h1M271,222.5h1M272,222.5h1M273,222.5h1M274,225.1h1M275,225.1h1M276,225.1h1M277,222.5h1M279,225.1h1M281,225.0h1M282,222.4h1M283,225.0h1M285,222.4h1M286,222.4h1M287,225.0h1M291,222.3h1M292,224.9h1M293,224.9h1M294,222.3h1M295,224.9h1M297,224.9h1M302,224.8h1M304,222.2h1M305,222.2h1M307,224.7h1M310,222.1h1M311,224.7h1M315,222.1h1M317,224.6h1M320,224.6h1M321,224.6h1M322,224.6h1M323,224.6h1M325,222.0h1M327,224.5h1M330,224.5h1M331,224.5h1M332,224.5h1M333,221.9h1M334,221.9h1M335,221.8h1M337,221.8h1M339,224.4h1M340,221.8h1M345,224.3h1M347,224.3h1M351,224.3h1M358,224.2h1M359,224.2h1M361,224.2h1M364,221.5h1M365,224.1h1M366,224.1h1M371,221.5h1M373,221.4h1M374,221.4h1M375,224.0h1M376,221.4h1M380,221.4h1M381,223.9h1M382,221.3h1M384,223.9h1M386,221.3h1M387,223.9h1M388,223.9h1M390,221.2h1M392,221.2h1M395,221.2h1M397,223.8h1M399,223.8h1M400,223.7h1M401,221.1h1M403,221.1h1M405,221.1h1M406,223.7h1M407,223.7h1M408,221.1h1M409,223.6h1M412,223.6h1M415,223.6h1M417,223.6h1M418,220.9h1M423,220.9h1M424,220.9h1M425,223.5h1M427,220.8h1M432,223.4h1M434,220.8h1M436,220.8h1M437,223.3h1M439,220.7h1M440,223.3h1M443,223.3h1M448,220.6h1M449,223.2h1M451,220.6h1M453,220.6h1M455,223.1h1M456,220.5h1M459,223.1h1M460,220.5h1M464,223.0h1M465,223.0h1M467,223.0h1M469,220.4h1M474,222.9h1M476,222.9h1M478,220.3h1M479,222.9h1M483,222.8h1M485,222.8h1M488,226.6h1M490,227.3h1M491,227.6h1M493,230.7h1M495,231.3h1M497,231.7h1M498,229.4h1M505,230.7h1M509,233.9h1M512,234.3h1M514,231.9h1M515,232.0h1M516,232.1h1M519,232.4h1M521,232.6h1M527,235.6h1M530,235.8h1M531,235.9h1M534,236.0h1M535,236.1h1M536,236.1h1M538,233.6h1M539,233.7h1M541,236.4h1M542,233.8h1M543,233.8h1M545,236.5h1M550,236.7h1M552,236.7h1M554,236.8h1M557,234.2h1M564,234.4h1M567,237.0h1M569,234.5h1M571,234.5h1M574,237.1h1M575,237.2h1M576,237.2h1M578,234.6h1M579,234.6h1M582,237.2h1M583,237.3h1M584,234.7h1M586,234.7h1M591,237.3h1M593,234.8h1M595,237.4h1M599,237.4h1M600,237.4h1M608,234.9h1M609,237.5h1M610,237.5h1M612,234.9h1M614,237.5h1M615,237.5h1M616,234.9h1M618,235.0h1M619,237.6h1M621,237.6h1M625,235.0h1M626,237.6h1M630,235.0h1M631,237.6h1M632,237.7h1M635,235.1h1M638,237.7h1M640,237.7h1M645,237.7h1M647,237.7h1M648,237.7h1M649,237.7h1M651,237.8h1M654,237.8h1M656,237.8h1M659,237.8h1M660,235.2h1M661,235.2h1M664,237.8h1M665,235.2h1M668,237.8h1M670,235.2h1M672,237.9h1M674,237.9h1M675,235.3h1M677,237.9h1M678,235.3h1M679,235.3h1M682,235.3h1M684,237.9h1M691,235.3h1M692,237.9h1M693,237.9h1M695,235.4h1M696,235.4h1M697,235.4h1M698,238.0h1M700,235.4h1M702,238.0h1M705,238.0h1M706,238.0h1M707,238.0h1M708,238.0h1M710,238.0h1M711,235.4h1M712,238.0h1M714,238.0h1M715,238.0h1M716,235.4h1M717,238.0h1M718,235.4h1M720,238.0h1M721,238.0h1M722,235.4h1M724,235.5h1M726,235.5h1M727,238.1h1M728,238.1h1M729,235.5h1M730,238.1h1M731,238.1h1M734,238.1h1M736,235.5h1M737,235.5h1M738,235.5h1M742,238.1h1M743,235.5h1M744,238.1h1M747,235.5h1M749,235.5h1M753,235.5h1M756,235.5h1M757,235.6h1M758,238.2h1M759,235.6h1M760,235.6h1M761,238.2h1M762,238.2h1M771,238.2h1M773,235.6h1M774,238.2h1M779,238.2h1M785,235.6h1M787,238.2h1M789,238.2h1M790,235.6h1M791,238.2h1M795,238.2h1M796,235.6h1M797,238.2h1M800,235.7h1M803,238.3h1M805,238.3h1M808,238.3h1M812,235.7h1M813,238.3h1M814,235.7h1M815,238.3h1M818,235.7h1M820,238.3h1M821,238.3h1M822,235.7h1M823,238.3h1M826,238.3h1M828,235.7h1M829,235.7h1M830,235.7h1M834,235.7h1M835,238.3h1M836,235.7h1M837,238.3h1M839,238.3h1M841,238.3h1M843,238.3h1M845,238.3h1M848,235.7h1M850,238.3h1M851,238.3h1M852,238.3h1M854,235.7h1M858,235.8h1M859,235.8h1M860,238.4h1M861,238.4h1M862,235.8h1M863,238.4h1M866,238.4h1M867,235.8h1M868,238.4h1M869,235.8h1M872,235.8h1M874,238.4h1M877,235.8h1M880,238.4h1M881,235.8h1M883,235.8h1M885,235.8h1M889,238.4h1M892,238.4h1M893,235.8h1M894,238.4h1M896,238.4h1M897,238.4h1M900,235.8h1M901,235.8h1M905,235.8h1M906,235.8h1M908,238.4h1M911,238.4h1M912,235.8h1M914,235.8h1M915,238.4h1M916,235.8h1M918,235.8h1M921,238.4h1M922,235.8h1M923,238.4h1M925,235.8h1M927,238.4h1M928,235.8h1M929,238.4h1M932,235.8h1M934,235.8h1M937,238.4h1M939,238.4h1M940,235.8h1M942,235.8h1M944,235.9h1M949,238.5h1M950,235.9h1M951,235.9h1M952,235.9h1M953,235.9h1M955,235.9h1M956,235.9h1M958,238.5h1M959,238.5h1M960,235.9h1M964,238.5h1M965,238.5h1M968,238.5h1M972,235.9h1M973,235.9h1M975,235.9h1M977,235.9h1M979,238.5h1M980,238.5h1M981,238.5h1M982,238.5h1M985,235.9h1M988,235.9h1M989,235.9h1M990,235.9h1M991,238.5h1M992,235.9h1M993,235.9h1M994,238.5h1M995,238.5h1M996,235.9h1M997,238.5h1M998,235.9h1M999,235.9h1M1000,235.9h1M1002,235.9h1M1003,235.9h1M1008,235.9h1M1009,235.9h1M1010,235.9h1M1012,235.9h1M1013,238.5h1" stroke="#8a1414" stroke-width="1" fill="none"/>
<line x1="486.8" y1="221.5" x2="486.8" y2="229" stroke="#9a1a1a" stroke-width="1.6"/>
<path d="M35,344.7h2.6M39,344.8h2.6M43,344.5h2.6M47,344.7h2.6M51,344.5h2.6M55,344.8h2.6M59,344.5h2.6M63,344.5h2.6M67,344.9h2.6M71,344.7h2.6M75,344.9h2.6M79,344.9h2.6M83,344.4h2.6M87,344.6h2.6M91,344.5h2.6M95,344.5h2.6M99,344.9h2.6M103,344.5h2.6M107,344.6h2.6M111,344.5h2.6M115,344.9h2.6M119,344.8h2.6M123,344.5h2.6M127,344.6h2.6M131,345.0h2.6M135,344.9h2.6M139,344.4h2.6M143,344.9h2.6M147,344.5h2.6M151,344.7h2.6M155,344.5h2.6M159,344.9h2.6M163,344.9h2.6M167,344.5h2.6M171,345.0h2.6M175,344.8h2.6M179,344.8h2.6M183,344.4h2.6M187,344.4h2.6M191,344.9h2.6M195,344.4h2.6M199,344.7h2.6M203,344.6h2.6M207,344.4h2.6M211,344.8h2.6M215,344.4h2.6M219,344.9h2.6M223,344.4h2.6M227,344.6h2.6M231,344.6h2.6M235,344.8h2.6M239,345.0h2.6M243,344.7h2.6M247,344.9h2.6M251,344.7h2.6M255,344.9h2.6M259,344.7h2.6M263,344.6h2.6M267,344.8h2.6M271,344.6h2.6M275,344.4h2.6M279,344.7h2.6M283,344.9h2.6M287,344.8h2.6M291,344.5h2.6M295,344.6h2.6M299,344.8h2.6M303,345.0h2.6M307,344.7h2.6M311,344.8h2.6M315,344.8h2.6M319,344.8h2.6M323,344.8h2.6M327,344.4h2.6M331,344.9h2.6M335,344.9h2.6M339,344.9h2.6M343,344.9h2.6M347,344.5h2.6M351,344.8h2.6M355,344.7h2.6M359,344.9h2.6M363,344.7h2.6M367,345.0h2.6M371,344.9h2.6M375,344.4h2.6M379,344.8h2.6M383,344.6h2.6M387,344.8h2.6M391,344.9h2.6M395,344.6h2.6M399,344.6h2.6M403,345.0h2.6M407,344.5h2.6M411,344.8h2.6M415,344.9h2.6M419,344.8h2.6M423,344.9h2.6M427,344.7h2.6M431,344.6h2.6M435,344.6h2.6M439,344.8h2.6M443,345.0h2.6M447,344.9h2.6M451,344.7h2.6M455,344.6h2.6M459,344.6h2.6M463,344.5h2.6M467,344.7h2.6M471,344.4h2.6M475,344.6h2.6M479,344.7h2.6M483,344.4h2.6M487,344.6h2.6M491,345.0h2.6M495,344.5h2.6M499,344.9h2.6M503,344.6h2.6M507,344.7h2.6M511,344.5h2.6M515,344.5h2.6M519,344.8h2.6M523,344.6h2.6M527,344.9h2.6M531,344.6h2.6M535,344.6h2.6M539,344.5h2.6M543,344.5h2.6M547,344.6h2.6M551,344.9h2.6M555,344.9h2.6M559,345.0h2.6M563,344.6h2.6M567,344.6h2.6M571,344.9h2.6M575,344.9h2.6M579,344.8h2.6M583,344.9h2.6M587,345.0h2.6M591,344.6h2.6M595,344.4h2.6M599,344.9h2.6M603,344.5h2.6M607,344.5h2.6M611,344.7h2.6M615,344.8h2.6M619,344.8h2.6M623,344.8h2.6M627,345.0h2.6M631,344.8h2.6M635,344.9h2.6M639,344.8h2.6M643,344.5h2.6M647,344.9h2.6M651,344.6h2.6M655,344.6h2.6M659,344.7h2.6M663,344.6h2.6M667,344.6h2.6M671,344.6h2.6M675,344.6h2.6M679,344.8h2.6M683,344.8h2.6M687,345.0h2.6M691,344.9h2.6M695,344.4h2.6M699,344.8h2.6M703,344.7h2.6M707,344.8h2.6M711,344.4h2.6M715,344.9h2.6M719,344.9h2.6M723,344.5h2.6M727,344.6h2.6M731,344.6h2.6M735,344.7h2.6M739,344.5h2.6M743,344.8h2.6M747,344.7h2.6M751,345.0h2.6M755,344.7h2.6M759,344.4h2.6M763,345.0h2.6M767,344.6h2.6M771,344.5h2.6M775,345.0h2.6M779,344.7h2.6M783,345.0h2.6M787,344.5h2.6M791,344.8h2.6M795,345.0h2.6M799,344.8h2.6M803,344.5h2.6M807,344.9h2.6M811,344.4h2.6M815,344.7h2.6M819,344.6h2.6M823,344.5h2.6M827,345.0h2.6M831,344.8h2.6M835,344.7h2.6M839,345.0h2.6M843,344.6h2.6M847,344.9h2.6M851,344.6h2.6M855,344.9h2.6M859,344.7h2.6M863,344.4h2.6M867,344.7h2.6M871,344.9h2.6M875,344.5h2.6M879,344.9h2.6M883,344.4h2.6M887,344.6h2.6M891,344.7h2.6M895,344.8h2.6M899,344.9h2.6M903,344.8h2.6M907,345.0h2.6M911,344.9h2.6M915,344.6h2.6M919,344.8h2.6M923,344.6h2.6M927,344.9h2.6M931,344.7h2.6M935,344.8h2.6M939,345.0h2.6M943,344.6h2.6M947,344.8h2.6M951,344.6h2.6M955,344.6h2.6M959,344.9h2.6M963,344.7h2.6M967,344.5h2.6M971,345.0h2.6M975,344.8h2.6M979,344.7h2.6M983,344.6h2.6M987,344.5h2.6M991,344.9h2.6M995,344.4h2.6M999,344.6h2.6M1003,344.7h2.6M1007,344.8h2.6M1011,344.9h2.6" stroke="#ee8a28" stroke-width="1.6" fill="none"/>
<line x1="7" y1="343.4" x2="1015" y2="343.4" stroke="#2a2ab8" stroke-width="1.6"/>
<polyline points="7.0,455.74 8.0,455.50 9.0,455.72 10.0,455.95 11.0,455.72 12.0,456.02 13.0,456.04 14.0,455.53 15.0,455.76 16.0,455.45 17.0,455.82 18.0,455.93 19.0,455.66 20.0,455.86 21.0,455.69 22.0,456.13 23.0,456.06 24.0,456.05 25.0,455.51 26.0,455.86 27.0,456.02 28.0,456.02 29.0,455.94 30.0,456.09 31.0,455.55 32.0,455.56 33.0,455.94 34.0,455.96 35.0,455.52 36.0,455.72 37.0,456.02 38.0,455.99 39.0,456.02 40.0,455.71 41.0,455.78 42.0,455.67 43.0,456.04 44.0,455.93 45.0,455.53 46.0,455.95 47.0,455.72 48.0,456.08 49.0,455.63 50.0,455.58 51.0,455.91 52.0,456.07 53.0,455.47 54.0,455.43 55.0,455.83 56.0,455.59 57.0,455.73 58.0,455.57 59.0,455.93 60.0,455.97 61.0,455.90 62.0,456.02 63.0,455.51 64.0,455.58 65.0,456.02 66.0,455.59 67.0,455.51 68.0,455.62 69.0,455.44 70.0,456.10 71.0,456.07 72.0,455.68 73.0,455.62 74.0,455.87 75.0,456.03 76.0,455.68 77.0,456.04 78.0,455.91 79.0,455.95 80.0,455.83 81.0,455.77 82.0,455.84 83.0,456.04 84.0,455.63 85.0,455.66 86.0,455.81 87.0,456.03 88.0,455.46 89.0,455.42 90.0,455.77 91.0,455.49 92.0,456.07 93.0,455.55 94.0,455.72 95.0,455.94 96.0,455.71 97.0,455.75 98.0,456.08 99.0,455.81 100.0,455.81 101.0,455.42 102.0,455.77 103.0,455.72 104.0,455.73 105.0,455.60 106.0,456.05 107.0,456.07 108.0,455.76 109.0,455.55 110.0,455.78 111.0,455.96 112.0,455.58 113.0,456.07 114.0,455.79 115.0,455.88 116.0,455.54 117.0,455.50 118.0,455.95 119.0,455.57 120.0,455.64 121.0,456.05 122.0,455.57 123.0,455.44 124.0,455.45 125.0,455.65 126.0,456.04 127.0,455.66 128.0,455.84 129.0,455.99 130.0,455.41 131.0,455.63 132.0,455.74 133.0,455.82 134.0,455.54 135.0,455.81 136.0,455.76 137.0,455.66 138.0,456.04 139.0,455.97 140.0,455.79 141.0,455.49 142.0,455.78 143.0,455.43 144.0,455.47 145.0,455.88 146.0,455.40 147.0,455.97 148.0,455.36 149.0,455.89 150.0,455.90 151.0,455.86 152.0,455.88 153.0,455.48 154.0,455.87 155.0,455.92 156.0,455.54 157.0,455.88 158.0,455.35 159.0,455.85 160.0,455.76 161.0,455.34 162.0,455.57 163.0,455.62 164.0,455.91 165.0,455.77 166.0,455.84 167.0,455.69 168.0,455.70 169.0,455.75 170.0,455.71 171.0,455.53 172.0,455.56 173.0,455.38 174.0,455.82 175.0,455.79 176.0,455.59 177.0,455.32 178.0,455.80 179.0,455.84 180.0,455.53 181.0,455.89 182.0,455.54 183.0,455.91 184.0,455.62 185.0,455.34 186.0,455.52 187.0,455.50 188.0,455.90 189.0,455.96 190.0,455.87 191.0,455.64 192.0,455.44 193.0,455.54 194.0,455.51 195.0,455.72 196.0,455.92 197.0,455.39 198.0,455.45 199.0,455.82 200.0,455.61 201.0,455.78 202.0,455.74 203.0,455.34 204.0,455.85 205.0,455.52 206.0,455.30 207.0,455.27 208.0,455.69 209.0,455.55 210.0,455.18 211.0,455.72 212.0,455.83 213.0,455.20 214.0,455.67 215.0,455.26 216.0,455.51 217.0,455.73 218.0,455.68 219.0,455.31 220.0,455.45 221.0,455.37 222.0,455.58 223.0,455.66 224.0,455.02 225.0,455.15 226.0,455.24 227.0,455.60 228.0,455.04 229.0,455.57 230.0,455.61 231.0,455.24 232.0,455.32 233.0,455.55 234.0,455.37 235.0,455.52 236.0,455.40 237.0,455.25 238.0,455.35 239.0,455.43 240.0,454.93 241.0,455.26 242.0,455.39 243.0,455.47 244.0,455.27 245.0,455.08 246.0,455.35 247.0,455.15 248.0,454.79 249.0,455.05 250.0,454.95 251.0,455.16 252.0,455.22 253.0,455.27 254.0,454.63 255.0,455.01 256.0,455.13 257.0,454.75 258.0,455.09 259.0,455.02 260.0,454.72 261.0,455.17 262.0,454.65 263.0,454.49 264.0,454.80 265.0,454.73 266.0,455.09 267.0,455.09 268.0,454.94 269.0,454.41 270.0,454.75 271.0,454.74 272.0,454.61 273.0,454.33 274.0,454.61 275.0,454.60 276.0,454.91 277.0,454.75 278.0,454.82 279.0,454.25 280.0,454.26 281.0,454.51 282.0,454.55 283.0,454.33 284.0,454.43 285.0,454.72 286.0,454.30 287.0,454.62 288.0,454.04 289.0,453.98 290.0,454.39 291.0,453.97 292.0,454.28 293.0,454.29 294.0,454.38 295.0,454.18 296.0,454.27 297.0,454.21 298.0,454.14 299.0,454.00 300.0,454.12 301.0,454.01 302.0,453.73 303.0,453.69 304.0,453.88 305.0,454.08 306.0,453.61 307.0,453.93 308.0,453.92 309.0,453.85 310.0,454.04 311.0,453.75 312.0,453.35 313.0,453.63 314.0,453.71 315.0,453.26 316.0,453.34 317.0,453.76 318.0,453.80 319.0,453.14 320.0,453.23 321.0,453.22 322.0,453.17 323.0,453.27 324.0,453.29 325.0,453.08 326.0,452.93 327.0,452.81 328.0,452.74 329.0,453.13 330.0,453.14 331.0,452.70 332.0,452.76 333.0,453.12 334.0,453.02 335.0,452.71 336.0,452.39 337.0,452.71 338.0,452.63 339.0,452.08 340.0,451.97 341.0,451.91 342.0,452.29 343.0,452.16 344.0,451.69 345.0,452.14 346.0,451.96 347.0,451.33 348.0,451.62 349.0,451.28 350.0,451.14 351.0,450.94 352.0,451.28 353.0,451.20 354.0,450.50 355.0,450.63 356.0,450.35 357.0,450.22 358.0,450.64 359.0,450.31 360.0,450.05 361.0,450.02 362.0,449.98 363.0,449.85 364.0,449.42 365.0,449.63 366.0,448.94 367.0,449.18 368.0,448.91 369.0,448.93 370.0,448.67 371.0,448.86 372.0,448.17 373.0,448.58 374.0,448.09 375.0,448.05 376.0,447.74 377.0,447.69 378.0,447.49 379.0,447.95 380.0,447.55 381.0,447.28 382.0,446.90 383.0,446.75 384.0,446.80 385.0,446.45 386.0,446.17 387.0,446.43 388.0,445.97 389.0,446.28 390.0,446.12 391.0,445.67 392.0,445.68 393.0,445.41 394.0,445.25 395.0,444.78 396.0,444.97 397.0,444.88 398.0,444.56 399.0,444.16 400.0,443.73 401.0,444.10 402.0,443.64 403.0,443.42 404.0,442.89 405.0,443.21 406.0,442.51 407.0,442.35 408.0,442.08 409.0,442.27 410.0,441.42 411.0,441.71 412.0,441.30 413.0,441.03 414.0,440.79 415.0,440.58 416.0,439.89 417.0,439.56 418.0,439.28 419.0,439.22 420.0,438.70 421.0,438.86 422.0,438.42 423.0,437.78 424.0,437.47 425.0,437.48 426.0,437.27 427.0,436.89 428.0,436.46 429.0,436.37 430.0,436.06 431.0,435.38 432.0,435.34 433.0,434.53 434.0,434.27 435.0,434.11 436.0,433.38 437.0,433.58 438.0,433.12 439.0,432.73 440.0,432.07 441.0,431.59 442.0,431.13 443.0,430.87 444.0,430.76 445.0,429.89 446.0,429.57 447.0,429.27 448.0,428.86 449.0,428.66 450.0,428.40 451.0,427.45 452.0,427.04 453.0,427.10 454.0,426.58 455.0,425.89 456.0,425.41 457.0,424.80 458.0,424.64 459.0,424.42 460.0,423.39 461.0,423.02 462.0,422.38 463.0,422.17 464.0,421.22 465.0,420.79 466.0,420.16 467.0,420.01 468.0,419.39 469.0,418.35 470.0,417.86 471.0,416.99 472.0,416.52 473.0,416.18 474.0,415.35 475.0,414.66 476.0,414.48 477.0,414.13 478.0,413.69 479.0,412.75 480.0,412.78 481.0,411.93 482.0,410.57 483.0,410.47 484.0,410.24 485.0,409.86 486.0,409.67 486.5,409.12" fill="none" stroke="#151515" stroke-width="1.6"/>
<line x1="486.9" y1="409.5" x2="486.9" y2="455.8" stroke="#b0b0b0" stroke-width="1.3"/>
<polyline points="487.0,455.86 490.0,455.61 493.0,455.50 496.0,455.54 499.0,455.65 502.0,455.65 505.0,455.61 508.0,455.69 511.0,455.69 514.0,455.54 517.0,455.72 520.0,455.70 523.0,455.66 526.0,455.69 529.0,455.87 532.0,455.86 535.0,455.67 538.0,455.52 541.0,455.58 544.0,455.61 547.0,455.68 550.0,455.60 553.0,455.64 556.0,455.52 559.0,455.70 562.0,455.69 565.0,455.59 568.0,455.74 571.0,455.90 574.0,455.87 577.0,455.65 580.0,455.52 583.0,455.67 586.0,455.52 589.0,455.71 592.0,455.70 595.0,455.63 598.0,455.54 601.0,455.69 604.0,455.69 607.0,455.88 610.0,455.81 613.0,455.55 616.0,455.82 619.0,455.75 622.0,455.54 625.0,455.61 628.0,455.82 631.0,455.53 634.0,455.78 637.0,455.69 640.0,455.60 643.0,455.70 646.0,455.75 649.0,455.82 652.0,455.86 655.0,455.76 658.0,455.77 661.0,455.51 664.0,455.76 667.0,455.81 670.0,455.77 673.0,455.56 676.0,455.65 679.0,455.65 682.0,455.85 685.0,455.63 688.0,455.52 691.0,455.84 694.0,455.76 697.0,455.76 700.0,455.78 703.0,455.51 706.0,455.68 709.0,455.79 712.0,455.68 715.0,455.84 718.0,455.61 721.0,455.89 724.0,455.84 727.0,455.62 730.0,455.63 733.0,455.58 736.0,455.53 739.0,455.51 742.0,455.57 745.0,455.64 748.0,455.69 751.0,455.53 754.0,455.65 757.0,455.84 760.0,455.80 763.0,455.77 766.0,455.58 769.0,455.86 772.0,455.58 775.0,455.69 778.0,455.62 781.0,455.81 784.0,455.61 787.0,455.89 790.0,455.80 793.0,455.51 796.0,455.57 799.0,455.67 802.0,455.78 805.0,455.73 808.0,455.81 811.0,455.60 814.0,455.83 817.0,455.56 820.0,455.82 823.0,455.74 826.0,455.69 829.0,455.72 832.0,455.65 835.0,455.60 838.0,455.72 841.0,455.61 844.0,455.67 847.0,455.86 850.0,455.90 853.0,455.55 856.0,455.63 859.0,455.80 862.0,455.57 865.0,455.67 868.0,455.53 871.0,455.83 874.0,455.82 877.0,455.60 880.0,455.73 883.0,455.59 886.0,455.56 889.0,455.80 892.0,455.89 895.0,455.78 898.0,455.54 901.0,455.67 904.0,455.83 907.0,455.89 910.0,455.86 913.0,455.53 916.0,455.80 919.0,455.57 922.0,455.56 925.0,455.53 928.0,455.65 931.0,455.62 934.0,455.77 937.0,455.78 940.0,455.73 943.0,455.68 946.0,455.70 949.0,455.71 952.0,455.77 955.0,455.65 958.0,455.71 961.0,455.72 964.0,455.67 967.0,455.74 970.0,455.60 973.0,455.65 976.0,455.84 979.0,455.88 982.0,455.76 985.0,455.66 988.0,455.88 991.0,455.60 994.0,455.83 997.0,455.78 1000.0,455.52 1003.0,455.77 1006.0,455.58 1009.0,455.63 1012.0,455.87 1015.0,455.68" fill="none" stroke="#151515" stroke-width="1.3"/>
<polyline points="7.0,544.95 8.0,545.08 9.0,545.14 10.0,545.11 11.0,544.99 12.0,544.94 13.0,545.14 14.0,545.14 15.0,544.87 16.0,545.13 17.0,545.00 18.0,544.96 19.0,544.88 20.0,545.06 21.0,544.95 22.0,545.05 23.0,544.95 24.0,544.98 25.0,544.94 26.0,545.13 27.0,545.02 28.0,545.09 29.0,544.86 30.0,544.98 31.0,545.09 32.0,545.01 33.0,545.02 34.0,544.97 35.0,544.96 36.0,544.92 37.0,544.98 38.0,544.92 39.0,545.05 40.0,544.91 41.0,545.06 42.0,545.02 43.0,545.02 44.0,545.05 45.0,544.93 46.0,544.85 47.0,545.00 48.0,544.90 49.0,544.97 50.0,544.87 51.0,544.88 52.0,544.98 53.0,545.03 54.0,544.91 55.0,545.05 56.0,544.99 57.0,544.85 58.0,544.81 59.0,544.93 60.0,544.99 61.0,545.02 62.0,544.80 63.0,545.06 64.0,544.97 65.0,544.91 66.0,544.95 67.0,544.79 68.0,545.02 69.0,545.03 70.0,544.80 71.0,544.85 72.0,544.83 73.0,544.83 74.0,545.04 75.0,545.01 76.0,544.84 77.0,544.78 78.0,544.79 79.0,544.79 80.0,544.82 81.0,544.90 82.0,544.78 83.0,544.86 84.0,544.85 85.0,544.98 86.0,545.02 87.0,544.85 88.0,545.03 89.0,544.83 90.0,544.83 91.0,544.77 92.0,544.76 93.0,545.04 94.0,544.78 95.0,545.00 96.0,544.84 97.0,544.89 98.0,544.78 99.0,544.92 100.0,545.03 101.0,544.97 102.0,544.95 103.0,544.98 104.0,544.85 105.0,544.81 106.0,544.73 107.0,544.81 108.0,544.74 109.0,544.86 110.0,544.74 111.0,544.76 112.0,544.95 113.0,544.85 114.0,544.85 115.0,544.95 116.0,544.89 117.0,544.95 118.0,544.84 119.0,544.83 120.0,544.70 121.0,544.98 122.0,544.76 123.0,544.95 124.0,544.83 125.0,544.92 126.0,544.84 127.0,544.84 128.0,544.78 129.0,544.70 130.0,544.75 131.0,544.69 132.0,544.83 133.0,544.74 134.0,544.89 135.0,544.81 136.0,544.73 137.0,544.72 138.0,544.96 139.0,544.96 140.0,544.93 141.0,544.70 142.0,544.68 143.0,544.80 144.0,544.76 145.0,544.87 146.0,544.86 147.0,544.86 148.0,544.89 149.0,544.77 150.0,544.80 151.0,544.74 152.0,544.87 153.0,544.73 154.0,544.73 155.0,544.73 156.0,544.71 157.0,544.69 158.0,544.82 159.0,544.70 160.0,544.64 161.0,544.72 162.0,544.86 163.0,544.84 164.0,544.88 165.0,544.82 166.0,544.76 167.0,544.71 168.0,544.63 169.0,544.81 170.0,544.80 171.0,544.74 172.0,544.62 173.0,544.84 174.0,544.76 175.0,544.73 176.0,544.85 177.0,544.88 178.0,544.72 179.0,544.80 180.0,544.75 181.0,544.82 182.0,544.80 183.0,544.68 184.0,544.60 185.0,544.81 186.0,544.61 187.0,544.85 188.0,544.62 189.0,544.83 190.0,544.85 191.0,544.74 192.0,544.59 193.0,544.77 194.0,544.57 195.0,544.76 196.0,544.82 197.0,544.76 198.0,544.66 199.0,544.71 200.0,544.60 201.0,544.76 202.0,544.76 203.0,544.77 204.0,544.56 205.0,544.82 206.0,544.74 207.0,544.70 208.0,544.75 209.0,544.63 210.0,544.78 211.0,544.71 212.0,544.65 213.0,544.60 214.0,544.64 215.0,544.77 216.0,544.74 217.0,544.63 218.0,544.79 219.0,544.66 220.0,544.68 221.0,544.54 222.0,544.80 223.0,544.79 224.0,544.73 225.0,544.62 226.0,544.57 227.0,544.56 228.0,544.75 229.0,544.73 230.0,544.62 231.0,544.56 232.0,544.73 233.0,544.72 234.0,544.77 235.0,544.64 236.0,544.75 237.0,544.64 238.0,544.73 239.0,544.49 240.0,544.64 241.0,544.73 242.0,544.69 243.0,544.77 244.0,544.66 245.0,544.57 246.0,544.69 247.0,544.73 248.0,544.67 249.0,544.67 250.0,544.48 251.0,544.46 252.0,544.53 253.0,544.56 254.0,544.70 255.0,544.53 256.0,544.47 257.0,544.47 258.0,544.75 259.0,544.52 260.0,544.55 261.0,544.70 262.0,544.72 263.0,544.51 264.0,544.60 265.0,544.52 266.0,544.48 267.0,544.67 268.0,544.38 269.0,544.57 270.0,544.59 271.0,544.58 272.0,544.52 273.0,544.61 274.0,544.57 275.0,544.52 276.0,544.33 277.0,544.57 278.0,544.35 279.0,544.33 280.0,544.37 281.0,544.42 282.0,544.36 283.0,544.39 284.0,544.34 285.0,544.31 286.0,544.44 287.0,544.42 288.0,544.22 289.0,544.46 290.0,544.24 291.0,544.27 292.0,544.39 293.0,544.41 294.0,544.42 295.0,544.39 296.0,544.27 297.0,544.37 298.0,544.32 299.0,544.32 300.0,544.34 301.0,544.32 302.0,544.16 303.0,544.14 304.0,544.21 305.0,544.22 306.0,544.18 307.0,544.05 308.0,543.95 309.0,543.95 310.0,544.17 311.0,544.16 312.0,543.88 313.0,543.97 314.0,544.03 315.0,543.98 316.0,543.83 317.0,544.05 318.0,543.97 319.0,543.86 320.0,543.89 321.0,543.84 322.0,543.90 323.0,543.95 324.0,543.84 325.0,543.74 326.0,543.72 327.0,543.85 328.0,543.79 329.0,543.65 330.0,543.79 331.0,543.66 332.0,543.75 333.0,543.69 334.0,543.41 335.0,543.49 336.0,543.32 337.0,543.56 338.0,543.30 339.0,543.26 340.0,543.31 341.0,543.38 342.0,543.25 343.0,543.26 344.0,543.15 345.0,543.07 346.0,542.98 347.0,542.95 348.0,542.72 349.0,542.69 350.0,542.89 351.0,542.58 352.0,542.54 353.0,542.54 354.0,542.54 355.0,542.27 356.0,542.41 357.0,542.28 358.0,542.04 359.0,542.06 360.0,542.16 361.0,542.02 362.0,541.77 363.0,541.84 364.0,541.60 365.0,541.62 366.0,541.52 367.0,541.64 368.0,541.43 369.0,541.49 370.0,541.27 371.0,541.28 372.0,540.98 373.0,541.17 374.0,541.02 375.0,540.88 376.0,540.95 377.0,540.91 378.0,540.62 379.0,540.52 380.0,540.64 381.0,540.60 382.0,540.25 383.0,540.28 384.0,540.02 385.0,539.92 386.0,539.95 387.0,539.97 388.0,539.86 389.0,539.72 390.0,539.63 391.0,539.38 392.0,539.36 393.0,539.17 394.0,539.08 395.0,538.96 396.0,538.94 397.0,538.71 398.0,538.63 399.0,538.68 400.0,538.53 401.0,538.29 402.0,538.16 403.0,538.16 404.0,537.86 405.0,537.95 406.0,537.82 407.0,537.72 408.0,537.36 409.0,537.41 410.0,537.20 411.0,536.96 412.0,537.00 413.0,536.67 414.0,536.50 415.0,536.55 416.0,536.43 417.0,536.18 418.0,535.83 419.0,535.77 420.0,535.63 421.0,535.33 422.0,535.33 423.0,535.02 424.0,534.85 425.0,534.64 426.0,534.29 427.0,534.35 428.0,534.13 429.0,533.93 430.0,533.61 431.0,533.35 432.0,533.10 433.0,532.83 434.0,532.62 435.0,532.48 436.0,532.21 437.0,532.07 438.0,531.92 439.0,531.46 440.0,531.41 441.0,531.02 442.0,530.81 443.0,530.53 444.0,530.39 445.0,530.10 446.0,529.77 447.0,529.66 448.0,529.28 449.0,529.08 450.0,528.87 451.0,528.74 452.0,528.46 453.0,528.15 454.0,527.84 455.0,527.51 456.0,527.30 457.0,527.00 458.0,526.72 459.0,526.41 460.0,526.02 461.0,525.73 462.0,525.39 463.0,524.93 464.0,524.56 465.0,524.35 466.0,523.83 467.0,523.52 468.0,523.15 469.0,522.67 470.0,522.20 471.0,521.89 472.0,521.40 473.0,520.85 474.0,520.69 475.0,520.22 476.0,519.88 477.0,519.61 478.0,519.29 479.0,519.09 480.0,518.74 481.0,517.96 482.0,517.64 483.0,517.33 484.0,516.86 485.0,516.89 486.0,516.72 486.5,516.65" fill="none" stroke="#7a2e96" stroke-width="1.5"/>
<line x1="486.9" y1="516.8" x2="486.9" y2="545" stroke="#b8a4c0" stroke-width="1.3"/>
<polyline points="487.0,545.08 490.0,545.07 493.0,545.11 496.0,545.04 499.0,545.16 502.0,545.03 505.0,545.11 508.0,545.13 511.0,545.06 514.0,545.03 517.0,545.18 520.0,545.20 523.0,545.12 526.0,545.16 529.0,545.09 532.0,545.05 535.0,545.10 538.0,545.00 541.0,545.11 544.0,545.16 547.0,545.07 550.0,545.19 553.0,545.02 556.0,545.05 559.0,545.12 562.0,545.11 565.0,545.17 568.0,545.00 571.0,545.16 574.0,545.01 577.0,545.16 580.0,545.13 583.0,545.00 586.0,545.18 589.0,545.06 592.0,545.10 595.0,545.19 598.0,545.08 601.0,545.02 604.0,545.04 607.0,545.15 610.0,545.03 613.0,545.06 616.0,545.04 619.0,545.09 622.0,545.02 625.0,545.19 628.0,545.18 631.0,545.02 634.0,545.03 637.0,545.11 640.0,545.19 643.0,545.15 646.0,545.03 649.0,545.17 652.0,545.01 655.0,545.10 658.0,545.15 661.0,545.08 664.0,545.13 667.0,545.14 670.0,545.04 673.0,545.03 676.0,545.06 679.0,545.02 682.0,545.03 685.0,545.01 688.0,545.07 691.0,545.14 694.0,545.03 697.0,545.09 700.0,545.02 703.0,545.04 706.0,545.07 709.0,545.19 712.0,545.04 715.0,545.02 718.0,545.17 721.0,545.07 724.0,545.08 727.0,545.09 730.0,545.10 733.0,545.00 736.0,545.13 739.0,545.18 742.0,545.03 745.0,545.18 748.0,545.16 751.0,545.13 754.0,545.13 757.0,545.09 760.0,545.12 763.0,545.18 766.0,545.16 769.0,545.11 772.0,545.18 775.0,545.00 778.0,545.09 781.0,545.00 784.0,545.13 787.0,545.13 790.0,545.10 793.0,545.03 796.0,545.01 799.0,545.16 802.0,545.10 805.0,545.10 808.0,545.14 811.0,545.03 814.0,545.13 817.0,545.10 820.0,545.18 823.0,545.14 826.0,545.19 829.0,545.17 832.0,545.07 835.0,545.14 838.0,545.04 841.0,545.08 844.0,545.13 847.0,545.07 850.0,545.10 853.0,545.12 856.0,545.20 859.0,545.03 862.0,545.18 865.0,545.04 868.0,545.20 871.0,545.04 874.0,545.13 877.0,545.12 880.0,545.00 883.0,545.12 886.0,545.07 889.0,545.13 892.0,545.11 895.0,545.16 898.0,545.07 901.0,545.11 904.0,545.11 907.0,545.19 910.0,545.17 913.0,545.20 916.0,545.10 919.0,545.17 922.0,545.01 925.0,545.09 928.0,545.02 931.0,545.08 934.0,545.06 937.0,545.10 940.0,545.14 943.0,545.00 946.0,545.12 949.0,545.03 952.0,545.08 955.0,545.18 958.0,545.12 961.0,545.09 964.0,545.18 967.0,545.16 970.0,545.02 973.0,545.09 976.0,545.07 979.0,545.01 982.0,545.17 985.0,545.06 988.0,545.01 991.0,545.05 994.0,545.16 997.0,545.04 1000.0,545.10 1003.0,545.10 1006.0,545.11 1009.0,545.15 1012.0,545.14 1015.0,545.13" fill="none" stroke="#7a2e96" stroke-width="1.3"/>
<path d="M475.5,362 h11.5 v12 l-5.75,4 l-5.75,-4 z" fill="#000" stroke="#f39322" stroke-width="1.2"/>
<text x="481.25" y="372.5" font-size="9" fill="#e88a2a" font-weight="700" text-anchor="middle" >T</text>
<text transform="translate(1012.8,58.02) scale(0.92,1)" font-size="9" fill="#14969e" font-weight="700" text-anchor="end" stroke="#14969e" stroke-width="0.35" >80 V</text>
<text transform="translate(1012.8,68.5) scale(0.92,1)" font-size="9" fill="#14969e" font-weight="700" text-anchor="end" stroke="#14969e" stroke-width="0.35" >70 V</text>
<text transform="translate(1012.8,78.99) scale(0.92,1)" font-size="9" fill="#14969e" font-weight="700" text-anchor="end" stroke="#14969e" stroke-width="0.35" >60 V</text>
<text transform="translate(1012.8,89.47) scale(0.92,1)" font-size="9" fill="#14969e" font-weight="700" text-anchor="end" stroke="#14969e" stroke-width="0.35" >50 V</text>
<text transform="translate(1012.8,99.96) scale(0.92,1)" font-size="9" fill="#14969e" font-weight="700" text-anchor="end" stroke="#14969e" stroke-width="0.35" >40 V</text>
<text transform="translate(1012.8,110.45) scale(0.92,1)" font-size="9" fill="#14969e" font-weight="700" text-anchor="end" stroke="#14969e" stroke-width="0.35" >30 V</text>
<text transform="translate(1012.8,120.93) scale(0.92,1)" font-size="9" fill="#14969e" font-weight="700" text-anchor="end" stroke="#14969e" stroke-width="0.35" >20 V</text>
<text transform="translate(1012.8,131.42) scale(0.92,1)" font-size="9" fill="#14969e" font-weight="700" text-anchor="end" stroke="#14969e" stroke-width="0.35" >10 V</text>
<text transform="translate(1012.8,141.9) scale(0.92,1)" font-size="9" fill="#14969e" font-weight="700" text-anchor="end" stroke="#14969e" stroke-width="0.35" >0 V</text>
<text transform="translate(1012.8,157.6) scale(0.92,1)" font-size="9" fill="#7e1414" font-weight="700" text-anchor="end" stroke="#7e1414" stroke-width="0.35" >16 V</text>
<text transform="translate(1012.8,167.97) scale(0.92,1)" font-size="9" fill="#7e1414" font-weight="700" text-anchor="end" stroke="#7e1414" stroke-width="0.35" >14 V</text>
<text transform="translate(1012.8,178.33) scale(0.92,1)" font-size="9" fill="#7e1414" font-weight="700" text-anchor="end" stroke="#7e1414" stroke-width="0.35" >12 V</text>
<text transform="translate(1012.8,188.7) scale(0.92,1)" font-size="9" fill="#7e1414" font-weight="700" text-anchor="end" stroke="#7e1414" stroke-width="0.35" >10 V</text>
<text transform="translate(1012.8,199.07) scale(0.92,1)" font-size="9" fill="#7e1414" font-weight="700" text-anchor="end" stroke="#7e1414" stroke-width="0.35" >8 V</text>
<text transform="translate(1012.8,209.44) scale(0.92,1)" font-size="9" fill="#7e1414" font-weight="700" text-anchor="end" stroke="#7e1414" stroke-width="0.35" >6 V</text>
<text transform="translate(1012.8,219.8) scale(0.92,1)" font-size="9" fill="#7e1414" font-weight="700" text-anchor="end" stroke="#7e1414" stroke-width="0.35" >4 V</text>
<text transform="translate(1012.8,230.17) scale(0.92,1)" font-size="9" fill="#7e1414" font-weight="700" text-anchor="end" stroke="#7e1414" stroke-width="0.35" >2 V</text>
<text transform="translate(1012.8,240.54) scale(0.92,1)" font-size="9" fill="#7e1414" font-weight="700" text-anchor="end" stroke="#7e1414" stroke-width="0.35" >0 V</text>
<text transform="translate(1012.8,250.9) scale(0.92,1)" font-size="9" fill="#7e1414" font-weight="700" text-anchor="end" stroke="#7e1414" stroke-width="0.35" >-2 V</text>
<text transform="translate(1012.8,264.1) scale(0.92,1)" font-size="9" fill="#1c1c8e" font-weight="700" text-anchor="end" stroke="#1c1c8e" stroke-width="0.35" >8 V</text>
<text transform="translate(1012.8,274.47) scale(0.92,1)" font-size="9" fill="#1c1c8e" font-weight="700" text-anchor="end" stroke="#1c1c8e" stroke-width="0.35" >7 V</text>
<text transform="translate(1012.8,284.85) scale(0.92,1)" font-size="9" fill="#1c1c8e" font-weight="700" text-anchor="end" stroke="#1c1c8e" stroke-width="0.35" >6 V</text>
<text transform="translate(1012.8,295.22) scale(0.92,1)" font-size="9" fill="#1c1c8e" font-weight="700" text-anchor="end" stroke="#1c1c8e" stroke-width="0.35" >5 V</text>
<text transform="translate(1012.8,305.6) scale(0.92,1)" font-size="9" fill="#1c1c8e" font-weight="700" text-anchor="end" stroke="#1c1c8e" stroke-width="0.35" >4 V</text>
<text transform="translate(1012.8,315.97) scale(0.92,1)" font-size="9" fill="#1c1c8e" font-weight="700" text-anchor="end" stroke="#1c1c8e" stroke-width="0.35" >3 V</text>
<text transform="translate(1012.8,326.35) scale(0.92,1)" font-size="9" fill="#1c1c8e" font-weight="700" text-anchor="end" stroke="#1c1c8e" stroke-width="0.35" >2 V</text>
<text transform="translate(1012.8,336.72) scale(0.92,1)" font-size="9" fill="#1c1c8e" font-weight="700" text-anchor="end" stroke="#1c1c8e" stroke-width="0.35" >1 V</text>
<text transform="translate(1012.8,347.1) scale(0.92,1)" font-size="9" fill="#1c1c8e" font-weight="700" text-anchor="end" stroke="#1c1c8e" stroke-width="0.35" >0 V</text>
<text transform="translate(1012.8,376.3) scale(0.92,1)" font-size="9" fill="#0a0a0a" font-weight="700" text-anchor="end" stroke="#0a0a0a" stroke-width="0.35" >16 A</text>
<text transform="translate(1012.8,386.64) scale(0.92,1)" font-size="9" fill="#0a0a0a" font-weight="700" text-anchor="end" stroke="#0a0a0a" stroke-width="0.35" >14 A</text>
<text transform="translate(1012.8,396.98) scale(0.92,1)" font-size="9" fill="#0a0a0a" font-weight="700" text-anchor="end" stroke="#0a0a0a" stroke-width="0.35" >12 A</text>
<text transform="translate(1012.8,407.32) scale(0.92,1)" font-size="9" fill="#0a0a0a" font-weight="700" text-anchor="end" stroke="#0a0a0a" stroke-width="0.35" >10 A</text>
<text transform="translate(1012.8,417.66) scale(0.92,1)" font-size="9" fill="#0a0a0a" font-weight="700" text-anchor="end" stroke="#0a0a0a" stroke-width="0.35" >8 A</text>
<text transform="translate(1012.8,428.0) scale(0.92,1)" font-size="9" fill="#0a0a0a" font-weight="700" text-anchor="end" stroke="#0a0a0a" stroke-width="0.35" >6 A</text>
<text transform="translate(1012.8,438.34) scale(0.92,1)" font-size="9" fill="#0a0a0a" font-weight="700" text-anchor="end" stroke="#0a0a0a" stroke-width="0.35" >4 A</text>
<text transform="translate(1012.8,448.68) scale(0.92,1)" font-size="9" fill="#0a0a0a" font-weight="700" text-anchor="end" stroke="#0a0a0a" stroke-width="0.35" >2 A</text>
<text transform="translate(1012.8,459.02) scale(0.92,1)" font-size="9" fill="#0a0a0a" font-weight="700" text-anchor="end" stroke="#0a0a0a" stroke-width="0.35" >0 A</text>
<text transform="translate(1012.8,475.0) scale(0.92,1)" font-size="9" fill="#5e1a7e" font-weight="700" text-anchor="end" stroke="#5e1a7e" stroke-width="0.35" >1.4 kW</text>
<text transform="translate(1012.8,485.52) scale(0.92,1)" font-size="9" fill="#5e1a7e" font-weight="700" text-anchor="end" stroke="#5e1a7e" stroke-width="0.35" >1.2 kW</text>
<text transform="translate(1012.8,496.05) scale(0.92,1)" font-size="9" fill="#5e1a7e" font-weight="700" text-anchor="end" stroke="#5e1a7e" stroke-width="0.35" >1 kW</text>
<text transform="translate(1012.8,506.57) scale(0.92,1)" font-size="9" fill="#5e1a7e" font-weight="700" text-anchor="end" stroke="#5e1a7e" stroke-width="0.35" >800 W</text>
<text transform="translate(1012.8,517.1) scale(0.92,1)" font-size="9" fill="#5e1a7e" font-weight="700" text-anchor="end" stroke="#5e1a7e" stroke-width="0.35" >600 W</text>
<text transform="translate(1012.8,527.62) scale(0.92,1)" font-size="9" fill="#5e1a7e" font-weight="700" text-anchor="end" stroke="#5e1a7e" stroke-width="0.35" >400 W</text>
<text transform="translate(1012.8,538.15) scale(0.92,1)" font-size="9" fill="#5e1a7e" font-weight="700" text-anchor="end" stroke="#5e1a7e" stroke-width="0.35" >200 W</text>
<text transform="translate(1012.8,548.67) scale(0.92,1)" font-size="9" fill="#5e1a7e" font-weight="700" text-anchor="end" stroke="#5e1a7e" stroke-width="0.35" >0 W</text>
<text transform="translate(1012.8,559.2) scale(0.92,1)" font-size="9" fill="#5e1a7e" font-weight="700" text-anchor="end" stroke="#5e1a7e" stroke-width="0.35" >-200 W</text>
<text transform="translate(78.6,569.6) scale(0.92,1)" font-size="8.8" fill="#111" font-weight="700" text-anchor="middle" stroke="#111" stroke-width="0.15" >-4 ms</text>
<text transform="translate(179.35,569.6) scale(0.92,1)" font-size="8.8" fill="#111" font-weight="700" text-anchor="middle" stroke="#111" stroke-width="0.15" >-3 ms</text>
<text transform="translate(280.1,569.6) scale(0.92,1)" font-size="8.8" fill="#111" font-weight="700" text-anchor="middle" stroke="#111" stroke-width="0.15" >-2 ms</text>
<text transform="translate(380.85,569.6) scale(0.92,1)" font-size="8.8" fill="#111" font-weight="700" text-anchor="middle" stroke="#111" stroke-width="0.15" >-1 ms</text>
<text transform="translate(481.6,569.6) scale(0.92,1)" font-size="8.8" fill="#111" font-weight="700" text-anchor="middle" stroke="#111" stroke-width="0.15" >0 s</text>
<text transform="translate(582.35,569.6) scale(0.92,1)" font-size="8.8" fill="#111" font-weight="700" text-anchor="middle" stroke="#111" stroke-width="0.15" >1 ms</text>
<text transform="translate(683.1,569.6) scale(0.92,1)" font-size="8.8" fill="#111" font-weight="700" text-anchor="middle" stroke="#111" stroke-width="0.15" >2 ms</text>
<text transform="translate(783.85,569.6) scale(0.92,1)" font-size="8.8" fill="#111" font-weight="700" text-anchor="middle" stroke="#111" stroke-width="0.15" >3 ms</text>
<text transform="translate(884.6,569.6) scale(0.92,1)" font-size="8.8" fill="#111" font-weight="700" text-anchor="middle" stroke="#111" stroke-width="0.15" >4 ms</text>
<text transform="translate(985.35,569.6) scale(0.92,1)" font-size="8.8" fill="#111" font-weight="700" text-anchor="middle" stroke="#111" stroke-width="0.15" >5 ms</text>
<path d="M1003,412.2 L1009.8,407.2 L1009.8,411.4 L1014.6,411.4 L1014.6,413 L1009.8,413 L1009.8,417.4 Z" fill="#111"/>
<path d="M986,48.4 L1008.5,48.4 Q1011.5,48.4 1011.5,51.4 L1011.5,72.7 Z" fill="#555" stroke="#111" stroke-width="0.8"/>
<circle cx="1005.8" cy="53.8" r="3" fill="none" stroke="#bdbdbd" stroke-width="1.3"/>
<line x1="1003.6" y1="56" x2="999" y2="60.6" stroke="#bdbdbd" stroke-width="1.5"/>
<text x="10.4" y="71.9" font-size="14" fill="#70b82a" font-weight="400" text-anchor="start" textLength="22.7" lengthAdjust="spacingAndGlyphs" stroke="#70b82a" stroke-width="0.45" >VIN</text>
<text x="37.2" y="131.1" font-size="14" fill="#22b0b8" font-weight="400" text-anchor="start" textLength="37.7" lengthAdjust="spacingAndGlyphs" stroke="#22b0b8" stroke-width="0.45" >VOUT</text>
<text x="20.5" y="220.7" font-size="14" fill="#8b1520" font-weight="400" text-anchor="start" textLength="26.2" lengthAdjust="spacingAndGlyphs" stroke="#8b1520" stroke-width="0.5" >VGS</text>
<text x="23.7" y="331.9" font-size="14" fill="#e8891e" font-weight="400" text-anchor="start" textLength="40.8" lengthAdjust="spacingAndGlyphs" stroke="#e8891e" stroke-width="0.45" >TIMER</text>
<text x="35.9" y="354.3" font-size="12.8" fill="#1a1a8a" font-weight="400" text-anchor="start" textLength="17.4" lengthAdjust="spacingAndGlyphs" stroke="#1a1a8a" stroke-width="0.55" >PG</text>
<text x="10.7" y="436.8" font-size="14" fill="#111111" font-weight="400" text-anchor="start" textLength="24.0" lengthAdjust="spacingAndGlyphs" stroke="#111111" stroke-width="0.45" >I_IN</text>
<text x="14.1" y="528.4" font-size="14" fill="#6a2080" font-weight="400" text-anchor="start" textLength="57.9" lengthAdjust="spacingAndGlyphs" stroke="#6a2080" stroke-width="0.45" >VDS*I_IN</text>
<path d="M11.5,129.8 L26,129.8 L35,138.8 L26,147.8 L11.5,147.8 Q9.5,147.8 9.5,145.8 L9.5,131.8 Q9.5,129.8 11.5,129.8 Z" fill="#e6f7f8" stroke="#5ed6dc" stroke-width="1.2" stroke-linejoin="round"/>
<path d="M11.0,129.8 L26,129.8 L28,131.8" stroke="#8cd04a" stroke-width="1.2" fill="none"/>
<text x="22.3" y="141.8" font-size="8.2" fill="#333" font-weight="400" text-anchor="middle" stroke="#333" stroke-width="0.25" letter-spacing="0.3">C 2</text>
<path d="M11.5,229.4 L26,229.4 L35,238.4 L26,247.4 L11.5,247.4 Q9.5,247.4 9.5,245.4 L9.5,231.4 Q9.5,229.4 11.5,229.4 Z" fill="#f6e2e2" stroke="#cc6666" stroke-width="1.2" stroke-linejoin="round"/>
<text x="22.3" y="241.4" font-size="8.2" fill="#b03a3a" font-weight="400" text-anchor="middle" stroke="#b03a3a" stroke-width="0.25" letter-spacing="0.3">M 3</text>
<path d="M11.5,334.8 L26,334.8 L35,343.8 L26,352.8 L11.5,352.8 Q9.5,352.8 9.5,350.8 L9.5,336.8 Q9.5,334.8 11.5,334.8 Z" fill="#e6e6f6" stroke="#5555cc" stroke-width="1.2" stroke-linejoin="round"/>
<path d="M11.0,334.8 L26,334.8 L28,336.8" stroke="#e89a40" stroke-width="1.2" fill="none"/>
<text x="22.3" y="346.8" font-size="8.2" fill="#4444bb" font-weight="400" text-anchor="middle" stroke="#4444bb" stroke-width="0.25" letter-spacing="0.3">C 6</text>
<path d="M11.5,447.0 L26,447.0 L35,456.0 L26,465.0 L11.5,465.0 Q9.5,465.0 9.5,463.0 L9.5,449.0 Q9.5,447.0 11.5,447.0 Z" fill="#e6e6e6" stroke="#808080" stroke-width="1.2" stroke-linejoin="round"/>
<text x="22.3" y="459.0" font-size="8.2" fill="#333" font-weight="400" text-anchor="middle" stroke="#333" stroke-width="0.25" letter-spacing="0.3">C 1</text>
<path d="M11.5,536.5 L26,536.5 L35,545.5 L26,554.5 L11.5,554.5 Q9.5,554.5 9.5,552.5 L9.5,538.5 Q9.5,536.5 11.5,536.5 Z" fill="#6e2a8e" stroke="#5a1e78" stroke-width="1.2" stroke-linejoin="round"/>
<text x="22.3" y="548.5" font-size="8.2" fill="#ffffff" font-weight="400" text-anchor="middle" stroke="#ffffff" stroke-width="0.25" letter-spacing="0.3">M 2</text>
<path d="M1026.5,574.5 V25.5 H1134" stroke="#4a4642" stroke-width="1" fill="none"/>
<line x1="1026.5" y1="574.3" x2="1134" y2="574.3" stroke="#4a4642" stroke-width="1"/>
<text x="1080.5" y="35.2" font-size="11.3" fill="#f0f0f0" font-weight="700" text-anchor="middle" >Add New...</text>
<defs><linearGradient id="btn" x1="0" y1="0" x2="0" y2="1"><stop offset="0" stop-color="#3b3b3b"/><stop offset="1" stop-color="#272727"/></linearGradient></defs>
<rect x="1032.5" y="42.5" width="45.5" height="26.5" rx="4" fill="url(#btn)" stroke="#4e4943" stroke-width="1"/>
<rect x="1083.5" y="42.5" width="45.5" height="26.5" rx="4" fill="url(#btn)" stroke="#4e4943" stroke-width="1"/>
<rect x="1032.5" y="75.5" width="45.5" height="26.5" rx="4" fill="url(#btn)" stroke="#4e4943" stroke-width="1"/>
<rect x="1083.5" y="75.5" width="45.5" height="26.5" rx="4" fill="url(#btn)" stroke="#4e4943" stroke-width="1"/>
<rect x="1032.5" y="108.5" width="45.5" height="26.5" rx="4" fill="url(#btn)" stroke="#4e4943" stroke-width="1"/>
<rect x="1083.5" y="108.5" width="45.5" height="26.5" rx="4" fill="url(#btn)" stroke="#4e4943" stroke-width="1"/>
<rect x="1032.5" y="144.5" width="45.5" height="26.5" rx="4" fill="url(#btn)" stroke="#4e4943" stroke-width="1"/>
<rect x="1083.5" y="144.5" width="45.5" height="26.5" rx="4" fill="url(#btn)" stroke="#4e4943" stroke-width="1"/>
<line x1="1029" y1="139.7" x2="1132" y2="139.7" stroke="#4a4642" stroke-width="1"/>
<line x1="1029" y1="176.4" x2="1132" y2="176.4" stroke="#4a4642" stroke-width="1"/>
<text x="1055.2" y="58.6" font-size="10.6" fill="#ececec" font-weight="400" text-anchor="middle" stroke="#ececec" stroke-width="0.3" >Cursors</text>
<text x="1106.2" y="58.6" font-size="10.6" fill="#ececec" font-weight="400" text-anchor="middle" stroke="#ececec" stroke-width="0.3" >Callout</text>
<text x="1055.2" y="91.8" font-size="10.6" fill="#ececec" font-weight="400" text-anchor="middle" stroke="#ececec" stroke-width="0.3" >Measure</text>
<text x="1106.2" y="91.8" font-size="10.6" fill="#ececec" font-weight="400" text-anchor="middle" stroke="#ececec" stroke-width="0.3" >Search</text>
<text x="1055.2" y="118.9" font-size="10.6" fill="#ececec" font-weight="400" text-anchor="middle" stroke="#ececec" stroke-width="0.3" >Results</text>
<text x="1055.2" y="130.2" font-size="10.6" fill="#ececec" font-weight="400" text-anchor="middle" stroke="#ececec" stroke-width="0.3" >Table</text>
<text x="1106.2" y="124.5" font-size="10.6" fill="#ececec" font-weight="400" text-anchor="middle" stroke="#ececec" stroke-width="0.3" >Plot</text>
<text x="1106.2" y="161" font-size="10.6" fill="#ececec" font-weight="400" text-anchor="middle" stroke="#ececec" stroke-width="0.3" >More...</text>
<rect x="1047.5" y="151.5" width="13" height="12" fill="none" stroke="#cfcfcf" stroke-width="1" stroke-dasharray="1.5,1.5"/>
<circle cx="1055" cy="156.5" r="2.8" fill="none" stroke="#e0e0e0" stroke-width="1.2"/>
<line x1="1053" y1="158.5" x2="1050.5" y2="161" stroke="#e0e0e0" stroke-width="1.4"/>
<path d="M1059,160 l3.5,3.5 l-1.5,0.3 z" fill="#e0e0e0"/>
<rect x="1021" y="294" width="2" height="2" fill="#cfcfcf"/>
<rect x="1021" y="299" width="2" height="2" fill="#cfcfcf"/>
<rect x="1021" y="303.8" width="2" height="2" fill="#cfcfcf"/>
<rect x="9.5" y="578.5" width="18" height="53.5" rx="4" fill="url(#btn)" stroke="#4e4943" stroke-width="1"/>
<path d="M21.5,599.5 L15.5,605.3 L21.5,611" stroke="#cccccc" stroke-width="2.4" fill="none"/>
<rect x="519.5" y="578.5" width="17" height="53.5" rx="4" fill="url(#btn)" stroke="#4e4943" stroke-width="1"/>
<path d="M524.8,599.5 L530.8,605.3 L524.8,611" stroke="#cccccc" stroke-width="2.4" fill="none"/>
<rect x="32.3" y="576.3" width="135.7" height="57.6" rx="3" fill="#1ccfd8"/>
<rect x="239" y="577" width="138.5" height="56.8" rx="3" fill="#2222cc"/>
<rect x="33.4" y="581" width="62.6" height="51.8" rx="3" fill="#72c9c9"/>
<path d="M33.4,594 V584 Q33.4,581 36.4,581 H93 Q96,581 96,584 V594 Z" fill="#8c8e9e"/>
<text x="37.4" y="591.0" font-size="10.8" fill="#a6eeee" font-weight="400" text-anchor="start" stroke="#a6eeee" stroke-width="0.35" >Ch 3</text>
<text x="36.8" y="604.3" font-size="10.8" fill="#186a6a" font-weight="400" text-anchor="start" textLength="37.3" lengthAdjust="spacingAndGlyphs" stroke="#186a6a" stroke-width="0.1" >10 V/div</text>
<path d="M39.5,615.7 C39.1,610.4000000000001 41.9,609.0 43.4,609.0 C45.4,609.0 47.5,610.7 47.5,615.7" stroke="#3a8a8a" stroke-width="1.7" fill="none"/>
<ellipse cx="39.5" cy="615.5" rx="1.5" ry="2" fill="none" stroke="#3a8a8a" stroke-width="1.1"/>
<ellipse cx="47.5" cy="615.8000000000001" rx="1.5" ry="2" fill="none" stroke="#3a8a8a" stroke-width="1.1"/>
<circle cx="43.3" cy="611.6" r="1.5" fill="none" stroke="#3a8a8a" stroke-width="1.2"/>
<text x="36.8" y="630.6" font-size="10.8" fill="#186a6a" font-weight="400" text-anchor="start" textLength="36.2" lengthAdjust="spacingAndGlyphs" stroke="#186a6a" stroke-width="0.1" >20 MHz</text>
<text x="84" y="628" font-size="7" fill="#1a6a6a" font-weight="700" text-anchor="start" >B</text>
<text x="88.2" y="630.2" font-size="6.5" fill="#1a6a6a" font-weight="700" text-anchor="start" >w</text>
<rect x="100.5" y="581" width="63.19999999999999" height="51.8" rx="3" fill="#c9c9c9"/>
<path d="M100.5,594 V584 Q100.5,581 103.5,581 H160.7 Q163.7,581 163.7,584 V594 Z" fill="#1e4646"/>
<text x="104.5" y="591.0" font-size="10.8" fill="#2fd4dc" font-weight="400" text-anchor="start" stroke="#2fd4dc" stroke-width="0.35" >Ch 2</text>
<text x="103.9" y="604.3" font-size="10.8" fill="#1e1e1e" font-weight="400" text-anchor="start" textLength="37.4" lengthAdjust="spacingAndGlyphs" stroke="#1e1e1e" stroke-width="0.1" >10 V/div</text>
<path d="M106.6,615.7 C106.2,610.4000000000001 109.0,609.0 110.5,609.0 C112.5,609.0 114.6,610.7 114.6,615.7" stroke="#505050" stroke-width="1.7" fill="none"/>
<ellipse cx="106.6" cy="615.5" rx="1.5" ry="2" fill="none" stroke="#505050" stroke-width="1.1"/>
<ellipse cx="114.6" cy="615.8000000000001" rx="1.5" ry="2" fill="none" stroke="#505050" stroke-width="1.1"/>
<circle cx="110.4" cy="611.6" r="1.5" fill="none" stroke="#505050" stroke-width="1.2"/>
<text x="103.9" y="630.6" font-size="10.8" fill="#1e1e1e" font-weight="400" text-anchor="start" textLength="36.2" lengthAdjust="spacingAndGlyphs" stroke="#1e1e1e" stroke-width="0.1" >20 MHz</text>
<text x="151.7" y="628" font-size="7" fill="#1e1e1e" font-weight="700" text-anchor="start" >B</text>
<text x="155.89999999999998" y="630.2" font-size="6.5" fill="#1e1e1e" font-weight="700" text-anchor="start" >w</text>
<rect x="171.5" y="581" width="63.900000000000006" height="51.8" rx="3" fill="#c9c9c9"/>
<path d="M171.5,594 V584 Q171.5,581 174.5,581 H232.4 Q235.4,581 235.4,584 V594 Z" fill="#3c1f1f"/>
<text x="175.5" y="591.0" font-size="10.8" fill="#ffffff" font-weight="400" text-anchor="start" stroke="#ffffff" stroke-width="0.35" >Math 3</text>
<text x="174.9" y="604.3" font-size="10.8" fill="#1e1e1e" font-weight="400" text-anchor="start" textLength="31.7" lengthAdjust="spacingAndGlyphs" stroke="#1e1e1e" stroke-width="0.1" >2 V/div</text>
<text x="174.9" y="617.6" font-size="10.8" fill="#1e1e1e" font-weight="400" text-anchor="start" textLength="47.1" lengthAdjust="spacingAndGlyphs" stroke="#1e1e1e" stroke-width="0.1" >Ch3 - Ch2</text>
<rect x="242.6" y="581" width="63.900000000000006" height="51.8" rx="3" fill="#c9c9c9"/>
<path d="M242.6,594 V584 Q242.6,581 245.6,581 H303.5 Q306.5,581 306.5,584 V594 Z" fill="#4a3318"/>
<text x="246.6" y="591.0" font-size="10.8" fill="#f29a38" font-weight="400" text-anchor="start" stroke="#f29a38" stroke-width="0.35" >Ch 5</text>
<text x="246.0" y="604.3" font-size="10.8" fill="#1e1e1e" font-weight="400" text-anchor="start" textLength="31.9" lengthAdjust="spacingAndGlyphs" stroke="#1e1e1e" stroke-width="0.1" >1 V/div</text>
<path d="M248.7,615.7 C248.29999999999998,610.4000000000001 251.1,609.0 252.6,609.0 C254.6,609.0 256.7,610.7 256.7,615.7" stroke="#505050" stroke-width="1.7" fill="none"/>
<ellipse cx="248.7" cy="615.5" rx="1.5" ry="2" fill="none" stroke="#505050" stroke-width="1.1"/>
<ellipse cx="256.7" cy="615.8000000000001" rx="1.5" ry="2" fill="none" stroke="#505050" stroke-width="1.1"/>
<circle cx="252.5" cy="611.6" r="1.5" fill="none" stroke="#505050" stroke-width="1.2"/>
<text x="246.0" y="630.6" font-size="10.8" fill="#1e1e1e" font-weight="400" text-anchor="start" textLength="36.2" lengthAdjust="spacingAndGlyphs" stroke="#1e1e1e" stroke-width="0.1" >20 MHz</text>
<text x="294.5" y="628" font-size="7" fill="#1e1e1e" font-weight="700" text-anchor="start" >B</text>
<text x="298.7" y="630.2" font-size="6.5" fill="#1e1e1e" font-weight="700" text-anchor="start" >w</text>
<rect x="310.8" y="581" width="63.19999999999999" height="51.8" rx="3" fill="#c9c9c9"/>
<path d="M310.8,594 V584 Q310.8,581 313.8,581 H371 Q374,581 374,584 V594 Z" fill="#23234a"/>
<text x="314.8" y="591.0" font-size="10.8" fill="#ffffff" font-weight="400" text-anchor="start" stroke="#ffffff" stroke-width="0.35" >Ch 6</text>
<text x="314.2" y="604.3" font-size="10.8" fill="#1e1e1e" font-weight="400" text-anchor="start" textLength="31.9" lengthAdjust="spacingAndGlyphs" stroke="#1e1e1e" stroke-width="0.1" >1 V/div</text>
<path d="M316.90000000000003,615.7 C316.5,610.4000000000001 319.3,609.0 320.8,609.0 C322.8,609.0 324.90000000000003,610.7 324.90000000000003,615.7" stroke="#505050" stroke-width="1.7" fill="none"/>
<ellipse cx="316.90000000000003" cy="615.5" rx="1.5" ry="2" fill="none" stroke="#505050" stroke-width="1.1"/>
<ellipse cx="324.90000000000003" cy="615.8000000000001" rx="1.5" ry="2" fill="none" stroke="#505050" stroke-width="1.1"/>
<circle cx="320.7" cy="611.6" r="1.5" fill="none" stroke="#505050" stroke-width="1.2"/>
<text x="314.2" y="630.6" font-size="10.8" fill="#1e1e1e" font-weight="400" text-anchor="start" textLength="36.2" lengthAdjust="spacingAndGlyphs" stroke="#1e1e1e" stroke-width="0.1" >20 MHz</text>
<text x="362" y="628" font-size="7" fill="#1e1e1e" font-weight="700" text-anchor="start" >B</text>
<text x="366.2" y="630.2" font-size="6.5" fill="#1e1e1e" font-weight="700" text-anchor="start" >w</text>
<rect x="381.8" y="581" width="63.69999999999999" height="51.8" rx="3" fill="#c9c9c9"/>
<path d="M381.8,594 V584 Q381.8,581 384.8,581 H442.5 Q445.5,581 445.5,584 V594 Z" fill="#1c1c1c"/>
<text x="385.8" y="591.0" font-size="10.8" fill="#e6e632" font-weight="400" text-anchor="start" stroke="#e6e632" stroke-width="0.35" >Ch 1</text>
<text x="385.2" y="604.3" font-size="10.8" fill="#1e1e1e" font-weight="400" text-anchor="start" textLength="32.8" lengthAdjust="spacingAndGlyphs" stroke="#1e1e1e" stroke-width="0.1" >2 A/div</text>
<text x="385.2" y="617.6" font-size="10.8" fill="#1e1e1e" font-weight="400" text-anchor="start" textLength="26.8" lengthAdjust="spacingAndGlyphs" stroke="#1e1e1e" stroke-width="0.1" >1 MΩ</text>
<text x="385.2" y="630.6" font-size="10.8" fill="#1e1e1e" font-weight="400" text-anchor="start" textLength="36.5" lengthAdjust="spacingAndGlyphs" stroke="#1e1e1e" stroke-width="0.1" >20 MHz</text>
<text x="433.5" y="628" font-size="7" fill="#1e1e1e" font-weight="700" text-anchor="start" >B</text>
<text x="437.7" y="630.2" font-size="6.5" fill="#1e1e1e" font-weight="700" text-anchor="start" >w</text>
<rect x="449" y="581" width="64" height="51.8" rx="3" fill="#c9c9c9"/>
<path d="M449,594 V584 Q449,581 452,581 H510 Q513,581 513,584 V594 Z" fill="#7a2a9a"/>
<text x="453" y="591.0" font-size="10.8" fill="#ffffff" font-weight="400" text-anchor="start" stroke="#ffffff" stroke-width="0.35" >Math 2</text>
<text transform="translate(452.6,604.3) scale(0.94,1)" font-size="10.8" fill="#1e1e1e" font-weight="400" text-anchor="start" stroke="#1e1e1e" stroke-width="0.1" >200 W/div</text>
<text transform="translate(452.6,617.6) scale(0.94,1)" font-size="10.8" fill="#1e1e1e" font-weight="400" text-anchor="start" stroke="#1e1e1e" stroke-width="0.1" >Math1 * <tspan letter-spacing="1.6">...</tspan></text>
<line x1="563" y1="577.6" x2="563" y2="633" stroke="#444" stroke-width="1"/>
<line x1="670.4" y1="577.6" x2="670.4" y2="633" stroke="#444" stroke-width="1"/>
<line x1="1055.7" y1="577.6" x2="1055.7" y2="633" stroke="#444" stroke-width="1"/>
<rect x="570.5" y="577.5" width="28" height="55.5" rx="4" fill="url(#btn)" stroke="#4e4943" stroke-width="1"/>
<rect x="573.5" y="583" width="22" height="2" fill="#8cc63f"/>
<text transform="translate(584.5,600.8) scale(0.95,1)" font-size="10.8" fill="#e8e8e8" font-weight="400" text-anchor="middle" stroke="#e8e8e8" stroke-width="0.2" >Add</text>
<text transform="translate(584.5,612) scale(0.95,1)" font-size="10.8" fill="#e8e8e8" font-weight="400" text-anchor="middle" stroke="#e8e8e8" stroke-width="0.2" >New</text>
<text transform="translate(584.5,623.6) scale(0.95,1)" font-size="10.8" fill="#e8e8e8" font-weight="400" text-anchor="middle" stroke="#e8e8e8" stroke-width="0.2" >Math</text>
<rect x="602.5" y="577.5" width="28" height="55.5" rx="4" fill="url(#btn)" stroke="#4e4943" stroke-width="1"/>
<rect x="605.5" y="583" width="22" height="2" fill="#b8b8d0"/>
<text transform="translate(616.5,600.8) scale(0.95,1)" font-size="10.8" fill="#e8e8e8" font-weight="400" text-anchor="middle" stroke="#e8e8e8" stroke-width="0.2" >Add</text>
<text transform="translate(616.5,612) scale(0.95,1)" font-size="10.8" fill="#e8e8e8" font-weight="400" text-anchor="middle" stroke="#e8e8e8" stroke-width="0.2" >New</text>
<text transform="translate(616.5,623.6) scale(0.95,1)" font-size="10.8" fill="#e8e8e8" font-weight="400" text-anchor="middle" stroke="#e8e8e8" stroke-width="0.2" >Ref</text>
<rect x="634.5" y="577.5" width="28" height="55.5" rx="4" fill="url(#btn)" stroke="#4e4943" stroke-width="1"/>
<rect x="637.5" y="583" width="22" height="2" fill="#c050e0"/>
<text transform="translate(648.5,600.8) scale(0.95,1)" font-size="10.8" fill="#e8e8e8" font-weight="400" text-anchor="middle" stroke="#e8e8e8" stroke-width="0.2" >Add</text>
<text transform="translate(648.5,612) scale(0.95,1)" font-size="10.8" fill="#e8e8e8" font-weight="400" text-anchor="middle" stroke="#e8e8e8" stroke-width="0.2" >New</text>
<text transform="translate(648.5,623.6) scale(0.95,1)" font-size="10.8" fill="#e8e8e8" font-weight="400" text-anchor="middle" stroke="#e8e8e8" stroke-width="0.2" >Bus</text>
<rect x="678" y="581.5" width="141.20000000000005" height="51.2" rx="3" fill="#c9c9c9"/>
<path d="M678,594.2 V584.5 Q678,581.5 681,581.5 H816.2 Q819.2,581.5 819.2,584.5 V594.2 Z" fill="#5a5a5a"/>
<text transform="translate(682,590.8) scale(0.97,1)" font-size="10.8" fill="#eeeeee" font-weight="400" text-anchor="start" stroke="#eeeeee" stroke-width="0.4" >Horizontal</text>
<text x="681.5" y="604.3" font-size="10.8" fill="#1a1a1a" font-weight="400" text-anchor="start" textLength="37.3" lengthAdjust="spacingAndGlyphs" stroke="#1a1a1a" stroke-width="0.1" >1 ms/div</text>
<text x="756.6" y="604.3" font-size="10.8" fill="#1a1a1a" font-weight="400" text-anchor="start" textLength="27.5" lengthAdjust="spacingAndGlyphs" stroke="#1a1a1a" stroke-width="0.1" >10 ms</text>
<text x="680.8" y="617.6" font-size="10.8" fill="#1a1a1a" font-weight="400" text-anchor="start" textLength="54.6" lengthAdjust="spacingAndGlyphs" stroke="#1a1a1a" stroke-width="0.1" >SR: 25 MS/s</text>
<text x="756.0" y="617.6" font-size="10.8" fill="#1a1a1a" font-weight="400" text-anchor="start" textLength="38.0" lengthAdjust="spacingAndGlyphs" stroke="#1a1a1a" stroke-width="0.1" >40 ns/pt</text>
<text x="680.8" y="630.6" font-size="10.8" fill="#1a1a1a" font-weight="400" text-anchor="start" textLength="56.8" lengthAdjust="spacingAndGlyphs" stroke="#1a1a1a" stroke-width="0.1" >RL: 250 kpts</text>
<text x="766.5" y="630.6" font-size="10.8" fill="#1a1a1a" font-weight="400" text-anchor="start" textLength="21.9" lengthAdjust="spacingAndGlyphs" stroke="#1a1a1a" stroke-width="0.1" >47%</text>
<path d="M756.8,622.5 h5.8 v5.5 l-2.9,2.5 l-2.9,-2.5 z" fill="#222" stroke="#e08a2a" stroke-width="1"/>
<rect x="823.8" y="581.5" width="113.20000000000005" height="51.2" rx="3" fill="#c9c9c9"/>
<path d="M823.8,594.2 V584.5 Q823.8,581.5 826.8,581.5 H934 Q937,581.5 937,584.5 V594.2 Z" fill="#5a5a5a"/>
<text transform="translate(827.8,590.8) scale(0.97,1)" font-size="10.8" fill="#eeeeee" font-weight="400" text-anchor="start" stroke="#eeeeee" stroke-width="0.4" >Trigger</text>
<rect x="827" y="595.6" width="21" height="10.8" rx="3" fill="#f4f02a" stroke="#444" stroke-width="0.8"/>
<text x="837.5" y="604.2" font-size="9" fill="#111" font-weight="400" text-anchor="middle" >1</text>
<path d="M855,605 L858,605 L864,597.5 L867,597.5" stroke="#6a5aa8" stroke-width="1.2" fill="none"/>
<text x="873.6" y="604.3" font-size="10.8" fill="#1a1a1a" font-weight="400" text-anchor="start" textLength="31.6" lengthAdjust="spacingAndGlyphs" stroke="#1a1a1a" stroke-width="0.1" >8.48 A</text>
<rect x="941.9" y="581.5" width="105.10000000000002" height="51.2" rx="3" fill="#c9c9c9"/>
<path d="M941.9,594.2 V584.5 Q941.9,581.5 944.9,581.5 H1044 Q1047,581.5 1047,584.5 V594.2 Z" fill="#5a5a5a"/>
<text transform="translate(945.9,590.8) scale(0.97,1)" font-size="10.8" fill="#eeeeee" font-weight="400" text-anchor="start" stroke="#eeeeee" stroke-width="0.4" >Acquisition</text>
<text x="944.3" y="604.3" font-size="10.8" fill="#1a1a1a" font-weight="400" text-anchor="start" textLength="25.5" lengthAdjust="spacingAndGlyphs" stroke="#1a1a1a" stroke-width="0.1" >Auto,</text>
<text x="1001.8" y="604.3" font-size="10.8" fill="#1a1a1a" font-weight="400" text-anchor="start" textLength="36.0" lengthAdjust="spacingAndGlyphs" stroke="#1a1a1a" stroke-width="0.1" >Analyze</text>
<text x="944.3" y="617.6" font-size="10.8" fill="#1a1a1a" font-weight="400" text-anchor="start" textLength="70.1" lengthAdjust="spacingAndGlyphs" stroke="#1a1a1a" stroke-width="0.1" >Sample: 12 bits</text>
<text x="944.3" y="630.6" font-size="10.8" fill="#1a1a1a" font-weight="400" text-anchor="start" textLength="50.3" lengthAdjust="spacingAndGlyphs" stroke="#1a1a1a" stroke-width="0.1" >Single: 1 /1</text>
<rect x="1063.7" y="579.7" width="63.8" height="25.7" rx="3" fill="#ff1c25"/>
<text x="1095.6" y="595.8" font-size="10.2" fill="#ffffff" font-weight="700" text-anchor="middle" stroke="#ffffff" stroke-width="0.3" >Stopped</text>
</svg></body></html>
